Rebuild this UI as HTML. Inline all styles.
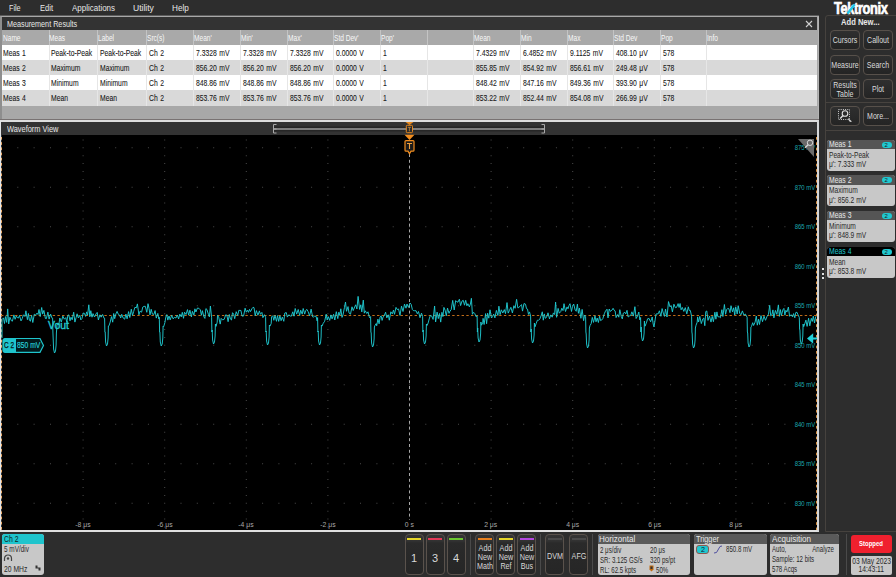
<!DOCTYPE html>
<html><head><meta charset="utf-8">
<style>
*{margin:0;padding:0;box-sizing:border-box}
html,body{width:896px;height:577px;overflow:hidden;background:#2d2d2d;font-family:"Liberation Sans",sans-serif;position:relative}
.a{position:absolute}
.t{position:absolute;line-height:1;white-space:nowrap}
.t span{display:inline-block}
.sbtn{position:absolute;width:30px;height:20px;border:1px solid #57504a;border-radius:4px;background:linear-gradient(#2f2f2f,#242424);color:#dcdcdc;font-size:9.5px;text-align:center;line-height:17.5px;white-space:nowrap}
.sbtn span{position:absolute;left:50%;top:0;transform:translateX(-50%) scaleX(.74);white-space:nowrap}
.cbtn{position:absolute;top:534px;width:19px;height:41px;border:1px solid #5a524c;border-radius:4px;background:linear-gradient(#343434 0,#323232 6px,#2a2a2a 8px,#262626 100%);color:#d8d8d8;text-align:center;white-space:nowrap}
.cbtn span{position:absolute;left:50%;transform:translateX(-50%) scaleX(.8)}
.cbar{position:absolute;left:1.5px;right:1.5px;top:3px;height:1.6px}
</style></head><body>
<div class="a" style="left:0;top:15.5px;width:819px;height:104.5px;background:#a8a8a8;border:1px solid #b4b4b4;border-top:1.5px solid #a8a8a8;border-left:2px solid #8e8e8e"></div>
<div class="a" style="left:0;top:15px;width:819px;height:1px;background:#5c5c5c"></div>
<div class="a" style="left:2px;top:17px;width:815px;height:13px;background:#333"></div>
<div class="t" style="left:7.40px;top:19.46px;font-size:9.5px;color:#e8e8e8;"><span style="transform:scaleX(0.76);transform-origin:0 0">Measurement Results</span></div>
<svg class="a" style="left:805px;top:20px" width="8" height="8"><path d="M1,1L7,7M7,1L1,7" stroke="#d0d0d0" stroke-width="1.1"/></svg>
<div class="a" style="left:2px;top:30px;width:815px;height:15px;background:#a9a9a9"></div>
<div class="t" style="left:2.80px;top:34.38px;font-size:9px;color:#f8f8f8;"><span style="transform:scaleX(0.73);transform-origin:0 0">Name</span></div>
<div class="a" style="left:48.5px;top:30px;width:1px;height:15px;background:#c4c4c4"></div>
<div class="t" style="left:49.30px;top:34.38px;font-size:9px;color:#f8f8f8;"><span style="transform:scaleX(0.73);transform-origin:0 0">Meas</span></div>
<div class="a" style="left:97px;top:30px;width:1px;height:15px;background:#c4c4c4"></div>
<div class="t" style="left:97.80px;top:34.38px;font-size:9px;color:#f8f8f8;"><span style="transform:scaleX(0.73);transform-origin:0 0">Label</span></div>
<div class="a" style="left:146px;top:30px;width:1px;height:15px;background:#c4c4c4"></div>
<div class="t" style="left:146.80px;top:34.38px;font-size:9px;color:#f8f8f8;"><span style="transform:scaleX(0.73);transform-origin:0 0">Src(s)</span></div>
<div class="a" style="left:193px;top:30px;width:1px;height:15px;background:#c4c4c4"></div>
<div class="t" style="left:193.80px;top:34.38px;font-size:9px;color:#f8f8f8;"><span style="transform:scaleX(0.73);transform-origin:0 0">Mean'</span></div>
<div class="a" style="left:240px;top:30px;width:1px;height:15px;background:#c4c4c4"></div>
<div class="t" style="left:240.80px;top:34.38px;font-size:9px;color:#f8f8f8;"><span style="transform:scaleX(0.73);transform-origin:0 0">Min'</span></div>
<div class="a" style="left:287px;top:30px;width:1px;height:15px;background:#c4c4c4"></div>
<div class="t" style="left:287.80px;top:34.38px;font-size:9px;color:#f8f8f8;"><span style="transform:scaleX(0.73);transform-origin:0 0">Max'</span></div>
<div class="a" style="left:333px;top:30px;width:1px;height:15px;background:#c4c4c4"></div>
<div class="t" style="left:333.80px;top:34.38px;font-size:9px;color:#f8f8f8;"><span style="transform:scaleX(0.73);transform-origin:0 0">Std Dev'</span></div>
<div class="a" style="left:380px;top:30px;width:1px;height:15px;background:#c4c4c4"></div>
<div class="t" style="left:380.80px;top:34.38px;font-size:9px;color:#f8f8f8;"><span style="transform:scaleX(0.73);transform-origin:0 0">Pop'</span></div>
<div class="a" style="left:426.5px;top:30px;width:1px;height:15px;background:#c4c4c4"></div>
<div class="a" style="left:473px;top:30px;width:1px;height:15px;background:#c4c4c4"></div>
<div class="t" style="left:473.80px;top:34.38px;font-size:9px;color:#f8f8f8;"><span style="transform:scaleX(0.73);transform-origin:0 0">Mean</span></div>
<div class="a" style="left:520px;top:30px;width:1px;height:15px;background:#c4c4c4"></div>
<div class="t" style="left:520.80px;top:34.38px;font-size:9px;color:#f8f8f8;"><span style="transform:scaleX(0.73);transform-origin:0 0">Min</span></div>
<div class="a" style="left:567px;top:30px;width:1px;height:15px;background:#c4c4c4"></div>
<div class="t" style="left:567.80px;top:34.38px;font-size:9px;color:#f8f8f8;"><span style="transform:scaleX(0.73);transform-origin:0 0">Max</span></div>
<div class="a" style="left:613px;top:30px;width:1px;height:15px;background:#c4c4c4"></div>
<div class="t" style="left:613.80px;top:34.38px;font-size:9px;color:#f8f8f8;"><span style="transform:scaleX(0.73);transform-origin:0 0">Std Dev</span></div>
<div class="a" style="left:660px;top:30px;width:1px;height:15px;background:#c4c4c4"></div>
<div class="t" style="left:660.80px;top:34.38px;font-size:9px;color:#f8f8f8;"><span style="transform:scaleX(0.73);transform-origin:0 0">Pop</span></div>
<div class="a" style="left:706px;top:30px;width:1px;height:15px;background:#c4c4c4"></div>
<div class="t" style="left:706.80px;top:34.38px;font-size:9px;color:#f8f8f8;"><span style="transform:scaleX(0.73);transform-origin:0 0">Info</span></div>
<div class="a" style="left:2px;top:45.0px;width:815px;height:15.15px;background:#ffffff"></div>
<div class="t" style="left:3.40px;top:48.68px;font-size:9px;color:#161616;-webkit-text-stroke:.08px #161616;word-spacing:0.8px"><span style="transform:scaleX(0.755);transform-origin:0 0">Meas 1</span></div>
<div class="a" style="left:48.5px;top:45.0px;width:1px;height:15.15px;background:#e6e6e6"></div>
<div class="t" style="left:51.00px;top:48.68px;font-size:9px;color:#161616;-webkit-text-stroke:.08px #161616;word-spacing:0.8px"><span style="transform:scaleX(0.755);transform-origin:0 0">Peak-to-Peak</span></div>
<div class="a" style="left:97px;top:45.0px;width:1px;height:15.15px;background:#e6e6e6"></div>
<div class="t" style="left:99.50px;top:48.68px;font-size:9px;color:#161616;-webkit-text-stroke:.08px #161616;word-spacing:0.8px"><span style="transform:scaleX(0.755);transform-origin:0 0">Peak-to-Peak</span></div>
<div class="a" style="left:146px;top:45.0px;width:1px;height:15.15px;background:#e6e6e6"></div>
<div class="t" style="left:148.50px;top:48.68px;font-size:9px;color:#161616;-webkit-text-stroke:.08px #161616;word-spacing:0.8px"><span style="transform:scaleX(0.755);transform-origin:0 0">Ch 2</span></div>
<div class="a" style="left:193px;top:45.0px;width:1px;height:15.15px;background:#e6e6e6"></div>
<div class="t" style="left:195.50px;top:48.68px;font-size:9px;color:#161616;-webkit-text-stroke:.08px #161616;word-spacing:0.8px"><span style="transform:scaleX(0.755);transform-origin:0 0">7.3328 mV</span></div>
<div class="a" style="left:240px;top:45.0px;width:1px;height:15.15px;background:#e6e6e6"></div>
<div class="t" style="left:242.50px;top:48.68px;font-size:9px;color:#161616;-webkit-text-stroke:.08px #161616;word-spacing:0.8px"><span style="transform:scaleX(0.755);transform-origin:0 0">7.3328 mV</span></div>
<div class="a" style="left:287px;top:45.0px;width:1px;height:15.15px;background:#e6e6e6"></div>
<div class="t" style="left:289.50px;top:48.68px;font-size:9px;color:#161616;-webkit-text-stroke:.08px #161616;word-spacing:0.8px"><span style="transform:scaleX(0.755);transform-origin:0 0">7.3328 mV</span></div>
<div class="a" style="left:333px;top:45.0px;width:1px;height:15.15px;background:#e6e6e6"></div>
<div class="t" style="left:335.50px;top:48.68px;font-size:9px;color:#161616;-webkit-text-stroke:.08px #161616;word-spacing:0.8px"><span style="transform:scaleX(0.755);transform-origin:0 0">0.0000 V</span></div>
<div class="a" style="left:380px;top:45.0px;width:1px;height:15.15px;background:#e6e6e6"></div>
<div class="t" style="left:382.50px;top:48.68px;font-size:9px;color:#161616;-webkit-text-stroke:.08px #161616;word-spacing:0.8px"><span style="transform:scaleX(0.755);transform-origin:0 0">1</span></div>
<div class="a" style="left:426.5px;top:45.0px;width:1px;height:15.15px;background:#e6e6e6"></div>
<div class="a" style="left:473px;top:45.0px;width:1px;height:15.15px;background:#e6e6e6"></div>
<div class="t" style="left:475.50px;top:48.68px;font-size:9px;color:#161616;-webkit-text-stroke:.08px #161616;word-spacing:0.8px"><span style="transform:scaleX(0.755);transform-origin:0 0">7.4329 mV</span></div>
<div class="a" style="left:520px;top:45.0px;width:1px;height:15.15px;background:#e6e6e6"></div>
<div class="t" style="left:522.50px;top:48.68px;font-size:9px;color:#161616;-webkit-text-stroke:.08px #161616;word-spacing:0.8px"><span style="transform:scaleX(0.755);transform-origin:0 0">6.4852 mV</span></div>
<div class="a" style="left:567px;top:45.0px;width:1px;height:15.15px;background:#e6e6e6"></div>
<div class="t" style="left:569.50px;top:48.68px;font-size:9px;color:#161616;-webkit-text-stroke:.08px #161616;word-spacing:0.8px"><span style="transform:scaleX(0.755);transform-origin:0 0">9.1125 mV</span></div>
<div class="a" style="left:613px;top:45.0px;width:1px;height:15.15px;background:#e6e6e6"></div>
<div class="t" style="left:615.50px;top:48.68px;font-size:9px;color:#161616;-webkit-text-stroke:.08px #161616;word-spacing:0.8px"><span style="transform:scaleX(0.755);transform-origin:0 0">408.10 μV</span></div>
<div class="a" style="left:660px;top:45.0px;width:1px;height:15.15px;background:#e6e6e6"></div>
<div class="t" style="left:662.50px;top:48.68px;font-size:9px;color:#161616;-webkit-text-stroke:.08px #161616;word-spacing:0.8px"><span style="transform:scaleX(0.755);transform-origin:0 0">578</span></div>
<div class="a" style="left:706px;top:45.0px;width:1px;height:15.15px;background:#e6e6e6"></div>
<div class="a" style="left:2px;top:60.15px;width:815px;height:15.15px;background:#d9d9d9"></div>
<div class="t" style="left:3.40px;top:63.83px;font-size:9px;color:#161616;-webkit-text-stroke:.08px #161616;word-spacing:0.8px"><span style="transform:scaleX(0.755);transform-origin:0 0">Meas 2</span></div>
<div class="a" style="left:48.5px;top:60.15px;width:1px;height:15.15px;background:#e6e6e6"></div>
<div class="t" style="left:51.00px;top:63.83px;font-size:9px;color:#161616;-webkit-text-stroke:.08px #161616;word-spacing:0.8px"><span style="transform:scaleX(0.755);transform-origin:0 0">Maximum</span></div>
<div class="a" style="left:97px;top:60.15px;width:1px;height:15.15px;background:#e6e6e6"></div>
<div class="t" style="left:99.50px;top:63.83px;font-size:9px;color:#161616;-webkit-text-stroke:.08px #161616;word-spacing:0.8px"><span style="transform:scaleX(0.755);transform-origin:0 0">Maximum</span></div>
<div class="a" style="left:146px;top:60.15px;width:1px;height:15.15px;background:#e6e6e6"></div>
<div class="t" style="left:148.50px;top:63.83px;font-size:9px;color:#161616;-webkit-text-stroke:.08px #161616;word-spacing:0.8px"><span style="transform:scaleX(0.755);transform-origin:0 0">Ch 2</span></div>
<div class="a" style="left:193px;top:60.15px;width:1px;height:15.15px;background:#e6e6e6"></div>
<div class="t" style="left:195.50px;top:63.83px;font-size:9px;color:#161616;-webkit-text-stroke:.08px #161616;word-spacing:0.8px"><span style="transform:scaleX(0.755);transform-origin:0 0">856.20 mV</span></div>
<div class="a" style="left:240px;top:60.15px;width:1px;height:15.15px;background:#e6e6e6"></div>
<div class="t" style="left:242.50px;top:63.83px;font-size:9px;color:#161616;-webkit-text-stroke:.08px #161616;word-spacing:0.8px"><span style="transform:scaleX(0.755);transform-origin:0 0">856.20 mV</span></div>
<div class="a" style="left:287px;top:60.15px;width:1px;height:15.15px;background:#e6e6e6"></div>
<div class="t" style="left:289.50px;top:63.83px;font-size:9px;color:#161616;-webkit-text-stroke:.08px #161616;word-spacing:0.8px"><span style="transform:scaleX(0.755);transform-origin:0 0">856.20 mV</span></div>
<div class="a" style="left:333px;top:60.15px;width:1px;height:15.15px;background:#e6e6e6"></div>
<div class="t" style="left:335.50px;top:63.83px;font-size:9px;color:#161616;-webkit-text-stroke:.08px #161616;word-spacing:0.8px"><span style="transform:scaleX(0.755);transform-origin:0 0">0.0000 V</span></div>
<div class="a" style="left:380px;top:60.15px;width:1px;height:15.15px;background:#e6e6e6"></div>
<div class="t" style="left:382.50px;top:63.83px;font-size:9px;color:#161616;-webkit-text-stroke:.08px #161616;word-spacing:0.8px"><span style="transform:scaleX(0.755);transform-origin:0 0">1</span></div>
<div class="a" style="left:426.5px;top:60.15px;width:1px;height:15.15px;background:#e6e6e6"></div>
<div class="a" style="left:473px;top:60.15px;width:1px;height:15.15px;background:#e6e6e6"></div>
<div class="t" style="left:475.50px;top:63.83px;font-size:9px;color:#161616;-webkit-text-stroke:.08px #161616;word-spacing:0.8px"><span style="transform:scaleX(0.755);transform-origin:0 0">855.85 mV</span></div>
<div class="a" style="left:520px;top:60.15px;width:1px;height:15.15px;background:#e6e6e6"></div>
<div class="t" style="left:522.50px;top:63.83px;font-size:9px;color:#161616;-webkit-text-stroke:.08px #161616;word-spacing:0.8px"><span style="transform:scaleX(0.755);transform-origin:0 0">854.92 mV</span></div>
<div class="a" style="left:567px;top:60.15px;width:1px;height:15.15px;background:#e6e6e6"></div>
<div class="t" style="left:569.50px;top:63.83px;font-size:9px;color:#161616;-webkit-text-stroke:.08px #161616;word-spacing:0.8px"><span style="transform:scaleX(0.755);transform-origin:0 0">856.61 mV</span></div>
<div class="a" style="left:613px;top:60.15px;width:1px;height:15.15px;background:#e6e6e6"></div>
<div class="t" style="left:615.50px;top:63.83px;font-size:9px;color:#161616;-webkit-text-stroke:.08px #161616;word-spacing:0.8px"><span style="transform:scaleX(0.755);transform-origin:0 0">249.48 μV</span></div>
<div class="a" style="left:660px;top:60.15px;width:1px;height:15.15px;background:#e6e6e6"></div>
<div class="t" style="left:662.50px;top:63.83px;font-size:9px;color:#161616;-webkit-text-stroke:.08px #161616;word-spacing:0.8px"><span style="transform:scaleX(0.755);transform-origin:0 0">578</span></div>
<div class="a" style="left:706px;top:60.15px;width:1px;height:15.15px;background:#e6e6e6"></div>
<div class="a" style="left:2px;top:75.3px;width:815px;height:15.15px;background:#ffffff"></div>
<div class="t" style="left:3.40px;top:78.98px;font-size:9px;color:#161616;-webkit-text-stroke:.08px #161616;word-spacing:0.8px"><span style="transform:scaleX(0.755);transform-origin:0 0">Meas 3</span></div>
<div class="a" style="left:48.5px;top:75.3px;width:1px;height:15.15px;background:#e6e6e6"></div>
<div class="t" style="left:51.00px;top:78.98px;font-size:9px;color:#161616;-webkit-text-stroke:.08px #161616;word-spacing:0.8px"><span style="transform:scaleX(0.755);transform-origin:0 0">Minimum</span></div>
<div class="a" style="left:97px;top:75.3px;width:1px;height:15.15px;background:#e6e6e6"></div>
<div class="t" style="left:99.50px;top:78.98px;font-size:9px;color:#161616;-webkit-text-stroke:.08px #161616;word-spacing:0.8px"><span style="transform:scaleX(0.755);transform-origin:0 0">Minimum</span></div>
<div class="a" style="left:146px;top:75.3px;width:1px;height:15.15px;background:#e6e6e6"></div>
<div class="t" style="left:148.50px;top:78.98px;font-size:9px;color:#161616;-webkit-text-stroke:.08px #161616;word-spacing:0.8px"><span style="transform:scaleX(0.755);transform-origin:0 0">Ch 2</span></div>
<div class="a" style="left:193px;top:75.3px;width:1px;height:15.15px;background:#e6e6e6"></div>
<div class="t" style="left:195.50px;top:78.98px;font-size:9px;color:#161616;-webkit-text-stroke:.08px #161616;word-spacing:0.8px"><span style="transform:scaleX(0.755);transform-origin:0 0">848.86 mV</span></div>
<div class="a" style="left:240px;top:75.3px;width:1px;height:15.15px;background:#e6e6e6"></div>
<div class="t" style="left:242.50px;top:78.98px;font-size:9px;color:#161616;-webkit-text-stroke:.08px #161616;word-spacing:0.8px"><span style="transform:scaleX(0.755);transform-origin:0 0">848.86 mV</span></div>
<div class="a" style="left:287px;top:75.3px;width:1px;height:15.15px;background:#e6e6e6"></div>
<div class="t" style="left:289.50px;top:78.98px;font-size:9px;color:#161616;-webkit-text-stroke:.08px #161616;word-spacing:0.8px"><span style="transform:scaleX(0.755);transform-origin:0 0">848.86 mV</span></div>
<div class="a" style="left:333px;top:75.3px;width:1px;height:15.15px;background:#e6e6e6"></div>
<div class="t" style="left:335.50px;top:78.98px;font-size:9px;color:#161616;-webkit-text-stroke:.08px #161616;word-spacing:0.8px"><span style="transform:scaleX(0.755);transform-origin:0 0">0.0000 V</span></div>
<div class="a" style="left:380px;top:75.3px;width:1px;height:15.15px;background:#e6e6e6"></div>
<div class="t" style="left:382.50px;top:78.98px;font-size:9px;color:#161616;-webkit-text-stroke:.08px #161616;word-spacing:0.8px"><span style="transform:scaleX(0.755);transform-origin:0 0">1</span></div>
<div class="a" style="left:426.5px;top:75.3px;width:1px;height:15.15px;background:#e6e6e6"></div>
<div class="a" style="left:473px;top:75.3px;width:1px;height:15.15px;background:#e6e6e6"></div>
<div class="t" style="left:475.50px;top:78.98px;font-size:9px;color:#161616;-webkit-text-stroke:.08px #161616;word-spacing:0.8px"><span style="transform:scaleX(0.755);transform-origin:0 0">848.42 mV</span></div>
<div class="a" style="left:520px;top:75.3px;width:1px;height:15.15px;background:#e6e6e6"></div>
<div class="t" style="left:522.50px;top:78.98px;font-size:9px;color:#161616;-webkit-text-stroke:.08px #161616;word-spacing:0.8px"><span style="transform:scaleX(0.755);transform-origin:0 0">847.16 mV</span></div>
<div class="a" style="left:567px;top:75.3px;width:1px;height:15.15px;background:#e6e6e6"></div>
<div class="t" style="left:569.50px;top:78.98px;font-size:9px;color:#161616;-webkit-text-stroke:.08px #161616;word-spacing:0.8px"><span style="transform:scaleX(0.755);transform-origin:0 0">849.36 mV</span></div>
<div class="a" style="left:613px;top:75.3px;width:1px;height:15.15px;background:#e6e6e6"></div>
<div class="t" style="left:615.50px;top:78.98px;font-size:9px;color:#161616;-webkit-text-stroke:.08px #161616;word-spacing:0.8px"><span style="transform:scaleX(0.755);transform-origin:0 0">393.90 μV</span></div>
<div class="a" style="left:660px;top:75.3px;width:1px;height:15.15px;background:#e6e6e6"></div>
<div class="t" style="left:662.50px;top:78.98px;font-size:9px;color:#161616;-webkit-text-stroke:.08px #161616;word-spacing:0.8px"><span style="transform:scaleX(0.755);transform-origin:0 0">578</span></div>
<div class="a" style="left:706px;top:75.3px;width:1px;height:15.15px;background:#e6e6e6"></div>
<div class="a" style="left:2px;top:90.45px;width:815px;height:15.15px;background:#d9d9d9"></div>
<div class="t" style="left:3.40px;top:94.13px;font-size:9px;color:#161616;-webkit-text-stroke:.08px #161616;word-spacing:0.8px"><span style="transform:scaleX(0.755);transform-origin:0 0">Meas 4</span></div>
<div class="a" style="left:48.5px;top:90.45px;width:1px;height:15.15px;background:#e6e6e6"></div>
<div class="t" style="left:51.00px;top:94.13px;font-size:9px;color:#161616;-webkit-text-stroke:.08px #161616;word-spacing:0.8px"><span style="transform:scaleX(0.755);transform-origin:0 0">Mean</span></div>
<div class="a" style="left:97px;top:90.45px;width:1px;height:15.15px;background:#e6e6e6"></div>
<div class="t" style="left:99.50px;top:94.13px;font-size:9px;color:#161616;-webkit-text-stroke:.08px #161616;word-spacing:0.8px"><span style="transform:scaleX(0.755);transform-origin:0 0">Mean</span></div>
<div class="a" style="left:146px;top:90.45px;width:1px;height:15.15px;background:#e6e6e6"></div>
<div class="t" style="left:148.50px;top:94.13px;font-size:9px;color:#161616;-webkit-text-stroke:.08px #161616;word-spacing:0.8px"><span style="transform:scaleX(0.755);transform-origin:0 0">Ch 2</span></div>
<div class="a" style="left:193px;top:90.45px;width:1px;height:15.15px;background:#e6e6e6"></div>
<div class="t" style="left:195.50px;top:94.13px;font-size:9px;color:#161616;-webkit-text-stroke:.08px #161616;word-spacing:0.8px"><span style="transform:scaleX(0.755);transform-origin:0 0">853.76 mV</span></div>
<div class="a" style="left:240px;top:90.45px;width:1px;height:15.15px;background:#e6e6e6"></div>
<div class="t" style="left:242.50px;top:94.13px;font-size:9px;color:#161616;-webkit-text-stroke:.08px #161616;word-spacing:0.8px"><span style="transform:scaleX(0.755);transform-origin:0 0">853.76 mV</span></div>
<div class="a" style="left:287px;top:90.45px;width:1px;height:15.15px;background:#e6e6e6"></div>
<div class="t" style="left:289.50px;top:94.13px;font-size:9px;color:#161616;-webkit-text-stroke:.08px #161616;word-spacing:0.8px"><span style="transform:scaleX(0.755);transform-origin:0 0">853.76 mV</span></div>
<div class="a" style="left:333px;top:90.45px;width:1px;height:15.15px;background:#e6e6e6"></div>
<div class="t" style="left:335.50px;top:94.13px;font-size:9px;color:#161616;-webkit-text-stroke:.08px #161616;word-spacing:0.8px"><span style="transform:scaleX(0.755);transform-origin:0 0">0.0000 V</span></div>
<div class="a" style="left:380px;top:90.45px;width:1px;height:15.15px;background:#e6e6e6"></div>
<div class="t" style="left:382.50px;top:94.13px;font-size:9px;color:#161616;-webkit-text-stroke:.08px #161616;word-spacing:0.8px"><span style="transform:scaleX(0.755);transform-origin:0 0">1</span></div>
<div class="a" style="left:426.5px;top:90.45px;width:1px;height:15.15px;background:#e6e6e6"></div>
<div class="a" style="left:473px;top:90.45px;width:1px;height:15.15px;background:#e6e6e6"></div>
<div class="t" style="left:475.50px;top:94.13px;font-size:9px;color:#161616;-webkit-text-stroke:.08px #161616;word-spacing:0.8px"><span style="transform:scaleX(0.755);transform-origin:0 0">853.22 mV</span></div>
<div class="a" style="left:520px;top:90.45px;width:1px;height:15.15px;background:#e6e6e6"></div>
<div class="t" style="left:522.50px;top:94.13px;font-size:9px;color:#161616;-webkit-text-stroke:.08px #161616;word-spacing:0.8px"><span style="transform:scaleX(0.755);transform-origin:0 0">852.44 mV</span></div>
<div class="a" style="left:567px;top:90.45px;width:1px;height:15.15px;background:#e6e6e6"></div>
<div class="t" style="left:569.50px;top:94.13px;font-size:9px;color:#161616;-webkit-text-stroke:.08px #161616;word-spacing:0.8px"><span style="transform:scaleX(0.755);transform-origin:0 0">854.08 mV</span></div>
<div class="a" style="left:613px;top:90.45px;width:1px;height:15.15px;background:#e6e6e6"></div>
<div class="t" style="left:615.50px;top:94.13px;font-size:9px;color:#161616;-webkit-text-stroke:.08px #161616;word-spacing:0.8px"><span style="transform:scaleX(0.755);transform-origin:0 0">266.99 μV</span></div>
<div class="a" style="left:660px;top:90.45px;width:1px;height:15.15px;background:#e6e6e6"></div>
<div class="t" style="left:662.50px;top:94.13px;font-size:9px;color:#161616;-webkit-text-stroke:.08px #161616;word-spacing:0.8px"><span style="transform:scaleX(0.755);transform-origin:0 0">578</span></div>
<div class="a" style="left:706px;top:90.45px;width:1px;height:15.15px;background:#e6e6e6"></div>
<div class="t" style="left:9.40px;top:2.96px;font-size:9.5px;color:#e6e6e6;"><span style="transform:scaleX(0.76);transform-origin:0 0">File</span></div>
<div class="t" style="left:39.80px;top:2.96px;font-size:9.5px;color:#e6e6e6;"><span style="transform:scaleX(0.8);transform-origin:0 0">Edit</span></div>
<div class="t" style="left:72.00px;top:2.96px;font-size:9.5px;color:#e6e6e6;"><span style="transform:scaleX(0.84);transform-origin:0 0">Applications</span></div>
<div class="t" style="left:133.20px;top:2.96px;font-size:9.5px;color:#e6e6e6;"><span style="transform:scaleX(0.9);transform-origin:0 0">Utility</span></div>
<div class="t" style="left:172.40px;top:2.96px;font-size:9.5px;color:#e6e6e6;"><span style="transform:scaleX(0.86);transform-origin:0 0">Help</span></div>
<div class="a" style="left:0;top:119px;width:819px;height:1px;background:#787272"></div>
<div class="a" style="left:0;top:120px;width:819px;height:412px;background:#000;border:2px solid #d4d6d8;border-top:2px solid #dedede;border-left:1px solid #e4e6e8;border-bottom:2px solid #e0e0e0"></div>
<div class="a" style="left:1px;top:122px;width:816px;height:12.7px;background:#333"></div>
<div class="t" style="left:7.20px;top:123.96px;font-size:9.5px;color:#e8e8e8;"><span style="transform:scaleX(0.78);transform-origin:0 0">Waveform View</span></div>
<svg class="a" style="left:0;top:0" width="896" height="577">
<path d="M82.6,139.4h1v1h-1zM82.6,147.3h1v1h-1zM82.6,155.2h1v1h-1zM82.6,163.1h1v1h-1zM82.6,171.0h1v1h-1zM82.6,178.9h1v1h-1zM82.6,186.8h1v1h-1zM82.6,194.7h1v1h-1zM82.6,202.6h1v1h-1zM82.6,210.5h1v1h-1zM82.6,218.4h1v1h-1zM82.6,226.3h1v1h-1zM82.6,234.2h1v1h-1zM82.6,242.1h1v1h-1zM82.6,250.0h1v1h-1zM82.6,257.9h1v1h-1zM82.6,265.8h1v1h-1zM82.6,273.7h1v1h-1zM82.6,281.6h1v1h-1zM82.6,289.5h1v1h-1zM82.6,297.4h1v1h-1zM82.6,305.3h1v1h-1zM82.6,313.2h1v1h-1zM82.6,321.1h1v1h-1zM82.6,329.0h1v1h-1zM82.6,336.9h1v1h-1zM82.6,344.8h1v1h-1zM82.6,352.7h1v1h-1zM82.6,360.6h1v1h-1zM82.6,368.5h1v1h-1zM82.6,376.4h1v1h-1zM82.6,384.3h1v1h-1zM82.6,392.2h1v1h-1zM82.6,400.1h1v1h-1zM82.6,408.0h1v1h-1zM82.6,415.9h1v1h-1zM82.6,423.8h1v1h-1zM82.6,431.7h1v1h-1zM82.6,439.6h1v1h-1zM82.6,447.5h1v1h-1zM82.6,455.4h1v1h-1zM82.6,463.3h1v1h-1zM82.6,471.2h1v1h-1zM82.6,479.1h1v1h-1zM82.6,487.0h1v1h-1zM82.6,494.9h1v1h-1zM82.6,502.8h1v1h-1zM82.6,510.7h1v1h-1zM82.6,518.6h1v1h-1zM82.6,526.5h1v1h-1zM164.2,139.4h1v1h-1zM164.2,147.3h1v1h-1zM164.2,155.2h1v1h-1zM164.2,163.1h1v1h-1zM164.2,171.0h1v1h-1zM164.2,178.9h1v1h-1zM164.2,186.8h1v1h-1zM164.2,194.7h1v1h-1zM164.2,202.6h1v1h-1zM164.2,210.5h1v1h-1zM164.2,218.4h1v1h-1zM164.2,226.3h1v1h-1zM164.2,234.2h1v1h-1zM164.2,242.1h1v1h-1zM164.2,250.0h1v1h-1zM164.2,257.9h1v1h-1zM164.2,265.8h1v1h-1zM164.2,273.7h1v1h-1zM164.2,281.6h1v1h-1zM164.2,289.5h1v1h-1zM164.2,297.4h1v1h-1zM164.2,305.3h1v1h-1zM164.2,313.2h1v1h-1zM164.2,321.1h1v1h-1zM164.2,329.0h1v1h-1zM164.2,336.9h1v1h-1zM164.2,344.8h1v1h-1zM164.2,352.7h1v1h-1zM164.2,360.6h1v1h-1zM164.2,368.5h1v1h-1zM164.2,376.4h1v1h-1zM164.2,384.3h1v1h-1zM164.2,392.2h1v1h-1zM164.2,400.1h1v1h-1zM164.2,408.0h1v1h-1zM164.2,415.9h1v1h-1zM164.2,423.8h1v1h-1zM164.2,431.7h1v1h-1zM164.2,439.6h1v1h-1zM164.2,447.5h1v1h-1zM164.2,455.4h1v1h-1zM164.2,463.3h1v1h-1zM164.2,471.2h1v1h-1zM164.2,479.1h1v1h-1zM164.2,487.0h1v1h-1zM164.2,494.9h1v1h-1zM164.2,502.8h1v1h-1zM164.2,510.7h1v1h-1zM164.2,518.6h1v1h-1zM164.2,526.5h1v1h-1zM245.8,139.4h1v1h-1zM245.8,147.3h1v1h-1zM245.8,155.2h1v1h-1zM245.8,163.1h1v1h-1zM245.8,171.0h1v1h-1zM245.8,178.9h1v1h-1zM245.8,186.8h1v1h-1zM245.8,194.7h1v1h-1zM245.8,202.6h1v1h-1zM245.8,210.5h1v1h-1zM245.8,218.4h1v1h-1zM245.8,226.3h1v1h-1zM245.8,234.2h1v1h-1zM245.8,242.1h1v1h-1zM245.8,250.0h1v1h-1zM245.8,257.9h1v1h-1zM245.8,265.8h1v1h-1zM245.8,273.7h1v1h-1zM245.8,281.6h1v1h-1zM245.8,289.5h1v1h-1zM245.8,297.4h1v1h-1zM245.8,305.3h1v1h-1zM245.8,313.2h1v1h-1zM245.8,321.1h1v1h-1zM245.8,329.0h1v1h-1zM245.8,336.9h1v1h-1zM245.8,344.8h1v1h-1zM245.8,352.7h1v1h-1zM245.8,360.6h1v1h-1zM245.8,368.5h1v1h-1zM245.8,376.4h1v1h-1zM245.8,384.3h1v1h-1zM245.8,392.2h1v1h-1zM245.8,400.1h1v1h-1zM245.8,408.0h1v1h-1zM245.8,415.9h1v1h-1zM245.8,423.8h1v1h-1zM245.8,431.7h1v1h-1zM245.8,439.6h1v1h-1zM245.8,447.5h1v1h-1zM245.8,455.4h1v1h-1zM245.8,463.3h1v1h-1zM245.8,471.2h1v1h-1zM245.8,479.1h1v1h-1zM245.8,487.0h1v1h-1zM245.8,494.9h1v1h-1zM245.8,502.8h1v1h-1zM245.8,510.7h1v1h-1zM245.8,518.6h1v1h-1zM245.8,526.5h1v1h-1zM327.4,139.4h1v1h-1zM327.4,147.3h1v1h-1zM327.4,155.2h1v1h-1zM327.4,163.1h1v1h-1zM327.4,171.0h1v1h-1zM327.4,178.9h1v1h-1zM327.4,186.8h1v1h-1zM327.4,194.7h1v1h-1zM327.4,202.6h1v1h-1zM327.4,210.5h1v1h-1zM327.4,218.4h1v1h-1zM327.4,226.3h1v1h-1zM327.4,234.2h1v1h-1zM327.4,242.1h1v1h-1zM327.4,250.0h1v1h-1zM327.4,257.9h1v1h-1zM327.4,265.8h1v1h-1zM327.4,273.7h1v1h-1zM327.4,281.6h1v1h-1zM327.4,289.5h1v1h-1zM327.4,297.4h1v1h-1zM327.4,305.3h1v1h-1zM327.4,313.2h1v1h-1zM327.4,321.1h1v1h-1zM327.4,329.0h1v1h-1zM327.4,336.9h1v1h-1zM327.4,344.8h1v1h-1zM327.4,352.7h1v1h-1zM327.4,360.6h1v1h-1zM327.4,368.5h1v1h-1zM327.4,376.4h1v1h-1zM327.4,384.3h1v1h-1zM327.4,392.2h1v1h-1zM327.4,400.1h1v1h-1zM327.4,408.0h1v1h-1zM327.4,415.9h1v1h-1zM327.4,423.8h1v1h-1zM327.4,431.7h1v1h-1zM327.4,439.6h1v1h-1zM327.4,447.5h1v1h-1zM327.4,455.4h1v1h-1zM327.4,463.3h1v1h-1zM327.4,471.2h1v1h-1zM327.4,479.1h1v1h-1zM327.4,487.0h1v1h-1zM327.4,494.9h1v1h-1zM327.4,502.8h1v1h-1zM327.4,510.7h1v1h-1zM327.4,518.6h1v1h-1zM327.4,526.5h1v1h-1zM490.6,139.4h1v1h-1zM490.6,147.3h1v1h-1zM490.6,155.2h1v1h-1zM490.6,163.1h1v1h-1zM490.6,171.0h1v1h-1zM490.6,178.9h1v1h-1zM490.6,186.8h1v1h-1zM490.6,194.7h1v1h-1zM490.6,202.6h1v1h-1zM490.6,210.5h1v1h-1zM490.6,218.4h1v1h-1zM490.6,226.3h1v1h-1zM490.6,234.2h1v1h-1zM490.6,242.1h1v1h-1zM490.6,250.0h1v1h-1zM490.6,257.9h1v1h-1zM490.6,265.8h1v1h-1zM490.6,273.7h1v1h-1zM490.6,281.6h1v1h-1zM490.6,289.5h1v1h-1zM490.6,297.4h1v1h-1zM490.6,305.3h1v1h-1zM490.6,313.2h1v1h-1zM490.6,321.1h1v1h-1zM490.6,329.0h1v1h-1zM490.6,336.9h1v1h-1zM490.6,344.8h1v1h-1zM490.6,352.7h1v1h-1zM490.6,360.6h1v1h-1zM490.6,368.5h1v1h-1zM490.6,376.4h1v1h-1zM490.6,384.3h1v1h-1zM490.6,392.2h1v1h-1zM490.6,400.1h1v1h-1zM490.6,408.0h1v1h-1zM490.6,415.9h1v1h-1zM490.6,423.8h1v1h-1zM490.6,431.7h1v1h-1zM490.6,439.6h1v1h-1zM490.6,447.5h1v1h-1zM490.6,455.4h1v1h-1zM490.6,463.3h1v1h-1zM490.6,471.2h1v1h-1zM490.6,479.1h1v1h-1zM490.6,487.0h1v1h-1zM490.6,494.9h1v1h-1zM490.6,502.8h1v1h-1zM490.6,510.7h1v1h-1zM490.6,518.6h1v1h-1zM490.6,526.5h1v1h-1zM572.2,139.4h1v1h-1zM572.2,147.3h1v1h-1zM572.2,155.2h1v1h-1zM572.2,163.1h1v1h-1zM572.2,171.0h1v1h-1zM572.2,178.9h1v1h-1zM572.2,186.8h1v1h-1zM572.2,194.7h1v1h-1zM572.2,202.6h1v1h-1zM572.2,210.5h1v1h-1zM572.2,218.4h1v1h-1zM572.2,226.3h1v1h-1zM572.2,234.2h1v1h-1zM572.2,242.1h1v1h-1zM572.2,250.0h1v1h-1zM572.2,257.9h1v1h-1zM572.2,265.8h1v1h-1zM572.2,273.7h1v1h-1zM572.2,281.6h1v1h-1zM572.2,289.5h1v1h-1zM572.2,297.4h1v1h-1zM572.2,305.3h1v1h-1zM572.2,313.2h1v1h-1zM572.2,321.1h1v1h-1zM572.2,329.0h1v1h-1zM572.2,336.9h1v1h-1zM572.2,344.8h1v1h-1zM572.2,352.7h1v1h-1zM572.2,360.6h1v1h-1zM572.2,368.5h1v1h-1zM572.2,376.4h1v1h-1zM572.2,384.3h1v1h-1zM572.2,392.2h1v1h-1zM572.2,400.1h1v1h-1zM572.2,408.0h1v1h-1zM572.2,415.9h1v1h-1zM572.2,423.8h1v1h-1zM572.2,431.7h1v1h-1zM572.2,439.6h1v1h-1zM572.2,447.5h1v1h-1zM572.2,455.4h1v1h-1zM572.2,463.3h1v1h-1zM572.2,471.2h1v1h-1zM572.2,479.1h1v1h-1zM572.2,487.0h1v1h-1zM572.2,494.9h1v1h-1zM572.2,502.8h1v1h-1zM572.2,510.7h1v1h-1zM572.2,518.6h1v1h-1zM572.2,526.5h1v1h-1zM653.8,139.4h1v1h-1zM653.8,147.3h1v1h-1zM653.8,155.2h1v1h-1zM653.8,163.1h1v1h-1zM653.8,171.0h1v1h-1zM653.8,178.9h1v1h-1zM653.8,186.8h1v1h-1zM653.8,194.7h1v1h-1zM653.8,202.6h1v1h-1zM653.8,210.5h1v1h-1zM653.8,218.4h1v1h-1zM653.8,226.3h1v1h-1zM653.8,234.2h1v1h-1zM653.8,242.1h1v1h-1zM653.8,250.0h1v1h-1zM653.8,257.9h1v1h-1zM653.8,265.8h1v1h-1zM653.8,273.7h1v1h-1zM653.8,281.6h1v1h-1zM653.8,289.5h1v1h-1zM653.8,297.4h1v1h-1zM653.8,305.3h1v1h-1zM653.8,313.2h1v1h-1zM653.8,321.1h1v1h-1zM653.8,329.0h1v1h-1zM653.8,336.9h1v1h-1zM653.8,344.8h1v1h-1zM653.8,352.7h1v1h-1zM653.8,360.6h1v1h-1zM653.8,368.5h1v1h-1zM653.8,376.4h1v1h-1zM653.8,384.3h1v1h-1zM653.8,392.2h1v1h-1zM653.8,400.1h1v1h-1zM653.8,408.0h1v1h-1zM653.8,415.9h1v1h-1zM653.8,423.8h1v1h-1zM653.8,431.7h1v1h-1zM653.8,439.6h1v1h-1zM653.8,447.5h1v1h-1zM653.8,455.4h1v1h-1zM653.8,463.3h1v1h-1zM653.8,471.2h1v1h-1zM653.8,479.1h1v1h-1zM653.8,487.0h1v1h-1zM653.8,494.9h1v1h-1zM653.8,502.8h1v1h-1zM653.8,510.7h1v1h-1zM653.8,518.6h1v1h-1zM653.8,526.5h1v1h-1zM735.4,139.4h1v1h-1zM735.4,147.3h1v1h-1zM735.4,155.2h1v1h-1zM735.4,163.1h1v1h-1zM735.4,171.0h1v1h-1zM735.4,178.9h1v1h-1zM735.4,186.8h1v1h-1zM735.4,194.7h1v1h-1zM735.4,202.6h1v1h-1zM735.4,210.5h1v1h-1zM735.4,218.4h1v1h-1zM735.4,226.3h1v1h-1zM735.4,234.2h1v1h-1zM735.4,242.1h1v1h-1zM735.4,250.0h1v1h-1zM735.4,257.9h1v1h-1zM735.4,265.8h1v1h-1zM735.4,273.7h1v1h-1zM735.4,281.6h1v1h-1zM735.4,289.5h1v1h-1zM735.4,297.4h1v1h-1zM735.4,305.3h1v1h-1zM735.4,313.2h1v1h-1zM735.4,321.1h1v1h-1zM735.4,329.0h1v1h-1zM735.4,336.9h1v1h-1zM735.4,344.8h1v1h-1zM735.4,352.7h1v1h-1zM735.4,360.6h1v1h-1zM735.4,368.5h1v1h-1zM735.4,376.4h1v1h-1zM735.4,384.3h1v1h-1zM735.4,392.2h1v1h-1zM735.4,400.1h1v1h-1zM735.4,408.0h1v1h-1zM735.4,415.9h1v1h-1zM735.4,423.8h1v1h-1zM735.4,431.7h1v1h-1zM735.4,439.6h1v1h-1zM735.4,447.5h1v1h-1zM735.4,455.4h1v1h-1zM735.4,463.3h1v1h-1zM735.4,471.2h1v1h-1zM735.4,479.1h1v1h-1zM735.4,487.0h1v1h-1zM735.4,494.9h1v1h-1zM735.4,502.8h1v1h-1zM735.4,510.7h1v1h-1zM735.4,518.6h1v1h-1zM735.4,526.5h1v1h-1zM17.3,147.3h1v1h-1zM33.6,147.3h1v1h-1zM50.0,147.3h1v1h-1zM66.3,147.3h1v1h-1zM82.6,147.3h1v1h-1zM98.9,147.3h1v1h-1zM115.2,147.3h1v1h-1zM131.6,147.3h1v1h-1zM147.9,147.3h1v1h-1zM164.2,147.3h1v1h-1zM180.5,147.3h1v1h-1zM196.8,147.3h1v1h-1zM213.2,147.3h1v1h-1zM229.5,147.3h1v1h-1zM245.8,147.3h1v1h-1zM262.1,147.3h1v1h-1zM278.4,147.3h1v1h-1zM294.8,147.3h1v1h-1zM311.1,147.3h1v1h-1zM327.4,147.3h1v1h-1zM343.7,147.3h1v1h-1zM360.0,147.3h1v1h-1zM376.4,147.3h1v1h-1zM392.7,147.3h1v1h-1zM409.0,147.3h1v1h-1zM425.3,147.3h1v1h-1zM441.6,147.3h1v1h-1zM458.0,147.3h1v1h-1zM474.3,147.3h1v1h-1zM490.6,147.3h1v1h-1zM506.9,147.3h1v1h-1zM523.2,147.3h1v1h-1zM539.6,147.3h1v1h-1zM555.9,147.3h1v1h-1zM572.2,147.3h1v1h-1zM588.5,147.3h1v1h-1zM604.8,147.3h1v1h-1zM621.2,147.3h1v1h-1zM637.5,147.3h1v1h-1zM653.8,147.3h1v1h-1zM670.1,147.3h1v1h-1zM686.4,147.3h1v1h-1zM702.8,147.3h1v1h-1zM719.1,147.3h1v1h-1zM735.4,147.3h1v1h-1zM751.7,147.3h1v1h-1zM768.0,147.3h1v1h-1zM784.4,147.3h1v1h-1zM800.7,147.3h1v1h-1zM17.3,186.8h1v1h-1zM33.6,186.8h1v1h-1zM50.0,186.8h1v1h-1zM66.3,186.8h1v1h-1zM82.6,186.8h1v1h-1zM98.9,186.8h1v1h-1zM115.2,186.8h1v1h-1zM131.6,186.8h1v1h-1zM147.9,186.8h1v1h-1zM164.2,186.8h1v1h-1zM180.5,186.8h1v1h-1zM196.8,186.8h1v1h-1zM213.2,186.8h1v1h-1zM229.5,186.8h1v1h-1zM245.8,186.8h1v1h-1zM262.1,186.8h1v1h-1zM278.4,186.8h1v1h-1zM294.8,186.8h1v1h-1zM311.1,186.8h1v1h-1zM327.4,186.8h1v1h-1zM343.7,186.8h1v1h-1zM360.0,186.8h1v1h-1zM376.4,186.8h1v1h-1zM392.7,186.8h1v1h-1zM409.0,186.8h1v1h-1zM425.3,186.8h1v1h-1zM441.6,186.8h1v1h-1zM458.0,186.8h1v1h-1zM474.3,186.8h1v1h-1zM490.6,186.8h1v1h-1zM506.9,186.8h1v1h-1zM523.2,186.8h1v1h-1zM539.6,186.8h1v1h-1zM555.9,186.8h1v1h-1zM572.2,186.8h1v1h-1zM588.5,186.8h1v1h-1zM604.8,186.8h1v1h-1zM621.2,186.8h1v1h-1zM637.5,186.8h1v1h-1zM653.8,186.8h1v1h-1zM670.1,186.8h1v1h-1zM686.4,186.8h1v1h-1zM702.8,186.8h1v1h-1zM719.1,186.8h1v1h-1zM735.4,186.8h1v1h-1zM751.7,186.8h1v1h-1zM768.0,186.8h1v1h-1zM784.4,186.8h1v1h-1zM800.7,186.8h1v1h-1zM17.3,226.3h1v1h-1zM33.6,226.3h1v1h-1zM50.0,226.3h1v1h-1zM66.3,226.3h1v1h-1zM82.6,226.3h1v1h-1zM98.9,226.3h1v1h-1zM115.2,226.3h1v1h-1zM131.6,226.3h1v1h-1zM147.9,226.3h1v1h-1zM164.2,226.3h1v1h-1zM180.5,226.3h1v1h-1zM196.8,226.3h1v1h-1zM213.2,226.3h1v1h-1zM229.5,226.3h1v1h-1zM245.8,226.3h1v1h-1zM262.1,226.3h1v1h-1zM278.4,226.3h1v1h-1zM294.8,226.3h1v1h-1zM311.1,226.3h1v1h-1zM327.4,226.3h1v1h-1zM343.7,226.3h1v1h-1zM360.0,226.3h1v1h-1zM376.4,226.3h1v1h-1zM392.7,226.3h1v1h-1zM409.0,226.3h1v1h-1zM425.3,226.3h1v1h-1zM441.6,226.3h1v1h-1zM458.0,226.3h1v1h-1zM474.3,226.3h1v1h-1zM490.6,226.3h1v1h-1zM506.9,226.3h1v1h-1zM523.2,226.3h1v1h-1zM539.6,226.3h1v1h-1zM555.9,226.3h1v1h-1zM572.2,226.3h1v1h-1zM588.5,226.3h1v1h-1zM604.8,226.3h1v1h-1zM621.2,226.3h1v1h-1zM637.5,226.3h1v1h-1zM653.8,226.3h1v1h-1zM670.1,226.3h1v1h-1zM686.4,226.3h1v1h-1zM702.8,226.3h1v1h-1zM719.1,226.3h1v1h-1zM735.4,226.3h1v1h-1zM751.7,226.3h1v1h-1zM768.0,226.3h1v1h-1zM784.4,226.3h1v1h-1zM800.7,226.3h1v1h-1zM17.3,265.8h1v1h-1zM33.6,265.8h1v1h-1zM50.0,265.8h1v1h-1zM66.3,265.8h1v1h-1zM82.6,265.8h1v1h-1zM98.9,265.8h1v1h-1zM115.2,265.8h1v1h-1zM131.6,265.8h1v1h-1zM147.9,265.8h1v1h-1zM164.2,265.8h1v1h-1zM180.5,265.8h1v1h-1zM196.8,265.8h1v1h-1zM213.2,265.8h1v1h-1zM229.5,265.8h1v1h-1zM245.8,265.8h1v1h-1zM262.1,265.8h1v1h-1zM278.4,265.8h1v1h-1zM294.8,265.8h1v1h-1zM311.1,265.8h1v1h-1zM327.4,265.8h1v1h-1zM343.7,265.8h1v1h-1zM360.0,265.8h1v1h-1zM376.4,265.8h1v1h-1zM392.7,265.8h1v1h-1zM409.0,265.8h1v1h-1zM425.3,265.8h1v1h-1zM441.6,265.8h1v1h-1zM458.0,265.8h1v1h-1zM474.3,265.8h1v1h-1zM490.6,265.8h1v1h-1zM506.9,265.8h1v1h-1zM523.2,265.8h1v1h-1zM539.6,265.8h1v1h-1zM555.9,265.8h1v1h-1zM572.2,265.8h1v1h-1zM588.5,265.8h1v1h-1zM604.8,265.8h1v1h-1zM621.2,265.8h1v1h-1zM637.5,265.8h1v1h-1zM653.8,265.8h1v1h-1zM670.1,265.8h1v1h-1zM686.4,265.8h1v1h-1zM702.8,265.8h1v1h-1zM719.1,265.8h1v1h-1zM735.4,265.8h1v1h-1zM751.7,265.8h1v1h-1zM768.0,265.8h1v1h-1zM784.4,265.8h1v1h-1zM800.7,265.8h1v1h-1zM17.3,305.3h1v1h-1zM33.6,305.3h1v1h-1zM50.0,305.3h1v1h-1zM66.3,305.3h1v1h-1zM82.6,305.3h1v1h-1zM98.9,305.3h1v1h-1zM115.2,305.3h1v1h-1zM131.6,305.3h1v1h-1zM147.9,305.3h1v1h-1zM164.2,305.3h1v1h-1zM180.5,305.3h1v1h-1zM196.8,305.3h1v1h-1zM213.2,305.3h1v1h-1zM229.5,305.3h1v1h-1zM245.8,305.3h1v1h-1zM262.1,305.3h1v1h-1zM278.4,305.3h1v1h-1zM294.8,305.3h1v1h-1zM311.1,305.3h1v1h-1zM327.4,305.3h1v1h-1zM343.7,305.3h1v1h-1zM360.0,305.3h1v1h-1zM376.4,305.3h1v1h-1zM392.7,305.3h1v1h-1zM409.0,305.3h1v1h-1zM425.3,305.3h1v1h-1zM441.6,305.3h1v1h-1zM458.0,305.3h1v1h-1zM474.3,305.3h1v1h-1zM490.6,305.3h1v1h-1zM506.9,305.3h1v1h-1zM523.2,305.3h1v1h-1zM539.6,305.3h1v1h-1zM555.9,305.3h1v1h-1zM572.2,305.3h1v1h-1zM588.5,305.3h1v1h-1zM604.8,305.3h1v1h-1zM621.2,305.3h1v1h-1zM637.5,305.3h1v1h-1zM653.8,305.3h1v1h-1zM670.1,305.3h1v1h-1zM686.4,305.3h1v1h-1zM702.8,305.3h1v1h-1zM719.1,305.3h1v1h-1zM735.4,305.3h1v1h-1zM751.7,305.3h1v1h-1zM768.0,305.3h1v1h-1zM784.4,305.3h1v1h-1zM800.7,305.3h1v1h-1zM17.3,344.8h1v1h-1zM33.6,344.8h1v1h-1zM50.0,344.8h1v1h-1zM66.3,344.8h1v1h-1zM82.6,344.8h1v1h-1zM98.9,344.8h1v1h-1zM115.2,344.8h1v1h-1zM131.6,344.8h1v1h-1zM147.9,344.8h1v1h-1zM164.2,344.8h1v1h-1zM180.5,344.8h1v1h-1zM196.8,344.8h1v1h-1zM213.2,344.8h1v1h-1zM229.5,344.8h1v1h-1zM245.8,344.8h1v1h-1zM262.1,344.8h1v1h-1zM278.4,344.8h1v1h-1zM294.8,344.8h1v1h-1zM311.1,344.8h1v1h-1zM327.4,344.8h1v1h-1zM343.7,344.8h1v1h-1zM360.0,344.8h1v1h-1zM376.4,344.8h1v1h-1zM392.7,344.8h1v1h-1zM409.0,344.8h1v1h-1zM425.3,344.8h1v1h-1zM441.6,344.8h1v1h-1zM458.0,344.8h1v1h-1zM474.3,344.8h1v1h-1zM490.6,344.8h1v1h-1zM506.9,344.8h1v1h-1zM523.2,344.8h1v1h-1zM539.6,344.8h1v1h-1zM555.9,344.8h1v1h-1zM572.2,344.8h1v1h-1zM588.5,344.8h1v1h-1zM604.8,344.8h1v1h-1zM621.2,344.8h1v1h-1zM637.5,344.8h1v1h-1zM653.8,344.8h1v1h-1zM670.1,344.8h1v1h-1zM686.4,344.8h1v1h-1zM702.8,344.8h1v1h-1zM719.1,344.8h1v1h-1zM735.4,344.8h1v1h-1zM751.7,344.8h1v1h-1zM768.0,344.8h1v1h-1zM784.4,344.8h1v1h-1zM800.7,344.8h1v1h-1zM17.3,384.3h1v1h-1zM33.6,384.3h1v1h-1zM50.0,384.3h1v1h-1zM66.3,384.3h1v1h-1zM82.6,384.3h1v1h-1zM98.9,384.3h1v1h-1zM115.2,384.3h1v1h-1zM131.6,384.3h1v1h-1zM147.9,384.3h1v1h-1zM164.2,384.3h1v1h-1zM180.5,384.3h1v1h-1zM196.8,384.3h1v1h-1zM213.2,384.3h1v1h-1zM229.5,384.3h1v1h-1zM245.8,384.3h1v1h-1zM262.1,384.3h1v1h-1zM278.4,384.3h1v1h-1zM294.8,384.3h1v1h-1zM311.1,384.3h1v1h-1zM327.4,384.3h1v1h-1zM343.7,384.3h1v1h-1zM360.0,384.3h1v1h-1zM376.4,384.3h1v1h-1zM392.7,384.3h1v1h-1zM409.0,384.3h1v1h-1zM425.3,384.3h1v1h-1zM441.6,384.3h1v1h-1zM458.0,384.3h1v1h-1zM474.3,384.3h1v1h-1zM490.6,384.3h1v1h-1zM506.9,384.3h1v1h-1zM523.2,384.3h1v1h-1zM539.6,384.3h1v1h-1zM555.9,384.3h1v1h-1zM572.2,384.3h1v1h-1zM588.5,384.3h1v1h-1zM604.8,384.3h1v1h-1zM621.2,384.3h1v1h-1zM637.5,384.3h1v1h-1zM653.8,384.3h1v1h-1zM670.1,384.3h1v1h-1zM686.4,384.3h1v1h-1zM702.8,384.3h1v1h-1zM719.1,384.3h1v1h-1zM735.4,384.3h1v1h-1zM751.7,384.3h1v1h-1zM768.0,384.3h1v1h-1zM784.4,384.3h1v1h-1zM800.7,384.3h1v1h-1zM17.3,423.8h1v1h-1zM33.6,423.8h1v1h-1zM50.0,423.8h1v1h-1zM66.3,423.8h1v1h-1zM82.6,423.8h1v1h-1zM98.9,423.8h1v1h-1zM115.2,423.8h1v1h-1zM131.6,423.8h1v1h-1zM147.9,423.8h1v1h-1zM164.2,423.8h1v1h-1zM180.5,423.8h1v1h-1zM196.8,423.8h1v1h-1zM213.2,423.8h1v1h-1zM229.5,423.8h1v1h-1zM245.8,423.8h1v1h-1zM262.1,423.8h1v1h-1zM278.4,423.8h1v1h-1zM294.8,423.8h1v1h-1zM311.1,423.8h1v1h-1zM327.4,423.8h1v1h-1zM343.7,423.8h1v1h-1zM360.0,423.8h1v1h-1zM376.4,423.8h1v1h-1zM392.7,423.8h1v1h-1zM409.0,423.8h1v1h-1zM425.3,423.8h1v1h-1zM441.6,423.8h1v1h-1zM458.0,423.8h1v1h-1zM474.3,423.8h1v1h-1zM490.6,423.8h1v1h-1zM506.9,423.8h1v1h-1zM523.2,423.8h1v1h-1zM539.6,423.8h1v1h-1zM555.9,423.8h1v1h-1zM572.2,423.8h1v1h-1zM588.5,423.8h1v1h-1zM604.8,423.8h1v1h-1zM621.2,423.8h1v1h-1zM637.5,423.8h1v1h-1zM653.8,423.8h1v1h-1zM670.1,423.8h1v1h-1zM686.4,423.8h1v1h-1zM702.8,423.8h1v1h-1zM719.1,423.8h1v1h-1zM735.4,423.8h1v1h-1zM751.7,423.8h1v1h-1zM768.0,423.8h1v1h-1zM784.4,423.8h1v1h-1zM800.7,423.8h1v1h-1zM17.3,463.3h1v1h-1zM33.6,463.3h1v1h-1zM50.0,463.3h1v1h-1zM66.3,463.3h1v1h-1zM82.6,463.3h1v1h-1zM98.9,463.3h1v1h-1zM115.2,463.3h1v1h-1zM131.6,463.3h1v1h-1zM147.9,463.3h1v1h-1zM164.2,463.3h1v1h-1zM180.5,463.3h1v1h-1zM196.8,463.3h1v1h-1zM213.2,463.3h1v1h-1zM229.5,463.3h1v1h-1zM245.8,463.3h1v1h-1zM262.1,463.3h1v1h-1zM278.4,463.3h1v1h-1zM294.8,463.3h1v1h-1zM311.1,463.3h1v1h-1zM327.4,463.3h1v1h-1zM343.7,463.3h1v1h-1zM360.0,463.3h1v1h-1zM376.4,463.3h1v1h-1zM392.7,463.3h1v1h-1zM409.0,463.3h1v1h-1zM425.3,463.3h1v1h-1zM441.6,463.3h1v1h-1zM458.0,463.3h1v1h-1zM474.3,463.3h1v1h-1zM490.6,463.3h1v1h-1zM506.9,463.3h1v1h-1zM523.2,463.3h1v1h-1zM539.6,463.3h1v1h-1zM555.9,463.3h1v1h-1zM572.2,463.3h1v1h-1zM588.5,463.3h1v1h-1zM604.8,463.3h1v1h-1zM621.2,463.3h1v1h-1zM637.5,463.3h1v1h-1zM653.8,463.3h1v1h-1zM670.1,463.3h1v1h-1zM686.4,463.3h1v1h-1zM702.8,463.3h1v1h-1zM719.1,463.3h1v1h-1zM735.4,463.3h1v1h-1zM751.7,463.3h1v1h-1zM768.0,463.3h1v1h-1zM784.4,463.3h1v1h-1zM800.7,463.3h1v1h-1zM17.3,502.8h1v1h-1zM33.6,502.8h1v1h-1zM50.0,502.8h1v1h-1zM66.3,502.8h1v1h-1zM82.6,502.8h1v1h-1zM98.9,502.8h1v1h-1zM115.2,502.8h1v1h-1zM131.6,502.8h1v1h-1zM147.9,502.8h1v1h-1zM164.2,502.8h1v1h-1zM180.5,502.8h1v1h-1zM196.8,502.8h1v1h-1zM213.2,502.8h1v1h-1zM229.5,502.8h1v1h-1zM245.8,502.8h1v1h-1zM262.1,502.8h1v1h-1zM278.4,502.8h1v1h-1zM294.8,502.8h1v1h-1zM311.1,502.8h1v1h-1zM327.4,502.8h1v1h-1zM343.7,502.8h1v1h-1zM360.0,502.8h1v1h-1zM376.4,502.8h1v1h-1zM392.7,502.8h1v1h-1zM409.0,502.8h1v1h-1zM425.3,502.8h1v1h-1zM441.6,502.8h1v1h-1zM458.0,502.8h1v1h-1zM474.3,502.8h1v1h-1zM490.6,502.8h1v1h-1zM506.9,502.8h1v1h-1zM523.2,502.8h1v1h-1zM539.6,502.8h1v1h-1zM555.9,502.8h1v1h-1zM572.2,502.8h1v1h-1zM588.5,502.8h1v1h-1zM604.8,502.8h1v1h-1zM621.2,502.8h1v1h-1zM637.5,502.8h1v1h-1zM653.8,502.8h1v1h-1zM670.1,502.8h1v1h-1zM686.4,502.8h1v1h-1zM702.8,502.8h1v1h-1zM719.1,502.8h1v1h-1zM735.4,502.8h1v1h-1zM751.7,502.8h1v1h-1zM768.0,502.8h1v1h-1zM784.4,502.8h1v1h-1zM800.7,502.8h1v1h-1z" fill="#4a4a4a"/>
<line x1="1.5" y1="135" x2="1.5" y2="530" stroke="#2c3238" stroke-width="1"/><line x1="1.5" y1="137" x2="1.5" y2="530" stroke="#f0b070" stroke-width="1" stroke-dasharray="2.7 2.5"/>
<line x1="816.5" y1="137" x2="816.5" y2="530" stroke="#d89040" stroke-width="1" stroke-dasharray="2.7 2.65"/>
<line x1="1" y1="315.5" x2="817" y2="315.5" stroke="#c06c18" stroke-width="1.1" stroke-dasharray="2.4 2.3"/>
<line x1="409.5" y1="154" x2="409.5" y2="520" stroke="#a8a8a8" stroke-width="1" stroke-dasharray="3 2.8"/>
<rect x="274" y="126.5" width="270" height="5" fill="#262626"/><line x1="274" y1="129" x2="544" y2="129" stroke="#9c9c9c" stroke-width="1.6"/>
<path d="M276.5,124.5h-3v8.5h3M273.5,129h3M541.5,124.5h3v8.5h-3M544.5,129h-3" stroke="#a8a8a8" fill="none" stroke-width="1"/>
<path d="M405.5,122h8l-4,3z" fill="#e8891e"/>
<rect x="406.3" y="125.3" width="6.2" height="7.4" rx="1" fill="#2a2a2a" stroke="#e8891e" stroke-width="1"/><path d="M407.8,127.3h3.2M409.4,127.3v4" stroke="#c88a40" stroke-width="0.8"/>
<path d="M404.5,134.7h10l-5,5.3z" fill="#f08c1e"/>
<path d="M406,140.6h7a1,1 0 0 1 1,1v8.6a1,1 0 0 1 -1,1h-2l-1.5,2.6l-1.5,-2.6h-2a1,1 0 0 1 -1,-1v-8.6a1,1 0 0 1 1,-1z" fill="#1a1a1a" stroke="#f08c1e" stroke-width="1.2"/>
<path d="M407,143.5h5M409.5,143.5v5.5" stroke="#f0a040" stroke-width="1.1"/>
<path d="M2.0,338.0 L2.0,319.6 L3.5,317.9 L4.5,323.5 L5.5,316.6 L6.7,322.4 L7.7,308.9 L8.7,324.0 L9.9,317.2 L11.4,320.7 L12.4,321.2 L13.9,314.9 L15.1,319.3 L16.3,316.0 L17.3,317.6 L18.5,318.0 L19.5,315.4 L21.0,320.9 L22.2,318.7 L23.4,314.8 L24.9,316.5 L25.9,310.8 L27.4,319.7 L28.4,313.5 L29.4,320.3 L30.4,321.2 L31.6,315.3 L32.8,322.5 L34.3,314.2 L35.5,315.2 L37.0,313.1 L38.0,314.5 L39.0,309.5 L40.2,316.6 L41.7,307.5 L42.7,314.1 L43.9,310.4 L45.4,318.5 L46.4,318.6 L47.9,312.1 L49.1,319.1 L50.6,314.1 L52.1,318.4 L52.6,318.2 L52.9,332.0 L53.2,339.0 L53.6,349.0 L54.5,353.0 L55.5,351.0 L56.1,345.0 L56.4,333.0 L57.0,325.1 L58.2,323.9 L58.8,325.0 L59.8,318.0 L61.3,322.0 L62.8,316.1 L64.3,319.2 L65.8,317.6 L66.8,322.3 L67.8,315.7 L68.8,314.8 L70.0,320.8 L71.0,317.2 L72.2,319.8 L73.7,312.2 L74.9,322.1 L76.1,317.6 L77.1,313.8 L78.3,317.9 L79.8,315.3 L80.8,319.9 L82.0,318.5 L83.2,313.0 L84.4,313.3 L85.6,316.4 L86.6,311.9 L87.6,315.0 L88.8,304.8 L89.8,316.8 L90.8,310.7 L92.0,317.2 L93.0,313.6 L94.5,317.0 L96.0,313.9 L97.2,312.4 L98.4,320.0 L99.9,314.8 L101.1,317.2 L102.6,314.5 L104.1,318.4 L104.6,318.3 L104.9,332.0 L105.2,332.0 L105.6,342.0 L106.5,346.0 L107.5,344.0 L108.1,338.0 L108.4,326.0 L109.0,325.8 L110.2,322.1 L111.5,316.6 L112.7,322.2 L113.7,313.5 L114.7,318.7 L115.9,313.9 L117.1,311.4 L118.3,314.3 L119.5,315.0 L120.7,318.0 L121.7,314.3 L123.2,318.0 L124.7,319.2 L125.9,314.1 L127.1,318.8 L128.6,311.6 L129.8,317.5 L131.3,309.2 L132.5,315.5 L133.7,311.4 L134.9,307.3 L136.4,307.8 L137.4,303.9 L138.9,314.8 L140.1,311.1 L141.6,312.2 L142.8,307.0 L143.8,306.4 L145.3,306.3 L146.8,312.3 L148.0,303.7 L149.0,308.2 L150.0,314.9 L151.2,309.3 L152.4,314.1 L153.9,314.4 L155.1,310.6 L156.3,318.1 L157.8,313.4 L158.8,318.9 L159.3,317.3 L159.6,332.0 L159.9,332.0 L160.3,342.0 L161.2,346.0 L162.2,344.0 L162.8,338.0 L163.1,326.0 L163.7,326.6 L164.9,322.6 L165.8,317.1 L166.8,314.6 L167.8,320.1 L169.0,316.0 L170.2,319.9 L171.7,315.3 L173.2,318.9 L174.4,317.3 L175.9,318.0 L177.4,315.0 L178.6,319.0 L179.8,314.1 L181.3,316.9 L182.3,312.3 L183.5,318.3 L184.5,312.2 L186.0,314.5 L187.5,309.6 L188.7,315.2 L189.9,310.2 L191.4,317.0 L192.4,311.3 L193.9,315.1 L194.9,308.8 L195.9,312.0 L197.4,308.1 L198.9,308.3 L200.4,309.9 L201.4,315.3 L202.4,310.7 L203.9,316.8 L204.9,318.4 L205.9,308.6 L206.9,309.5 L208.4,314.3 L209.4,316.9 L210.4,306.0 L211.6,317.2 L211.9,332.0 L212.2,330.0 L212.6,340.0 L213.5,344.0 L214.5,342.0 L215.1,336.0 L215.4,324.0 L216.0,326.4 L217.2,322.2 L217.5,315.4 L218.7,317.1 L220.2,324.1 L221.2,318.4 L222.7,319.9 L224.2,319.3 L225.7,314.8 L226.9,315.3 L228.1,321.7 L229.3,314.5 L230.5,319.2 L231.5,320.0 L232.5,312.7 L233.7,314.1 L234.7,318.7 L236.2,311.7 L237.7,315.4 L238.9,310.2 L239.9,310.5 L240.9,310.4 L242.1,316.1 L243.6,316.0 L245.1,308.2 L246.3,312.2 L247.5,310.1 L248.5,312.3 L249.5,309.4 L250.5,311.6 L252.0,308.6 L253.0,307.3 L254.0,307.6 L255.2,315.7 L256.4,310.6 L257.9,315.2 L259.4,310.9 L260.4,314.3 L261.9,312.4 L262.9,317.7 L264.4,314.7 L265.6,317.3 L265.9,332.0 L266.2,331.0 L266.6,341.0 L267.5,345.0 L268.5,343.0 L269.1,337.0 L269.4,325.0 L270.0,326.1 L271.2,323.5 L271.6,316.9 L272.8,315.7 L273.8,320.3 L275.0,315.5 L276.5,321.3 L277.5,315.6 L278.7,321.4 L279.9,315.8 L281.1,320.7 L282.3,317.1 L283.8,321.3 L284.8,313.0 L286.3,312.6 L287.3,317.1 L288.8,314.8 L290.3,316.0 L291.3,316.2 L292.8,311.8 L294.0,316.2 L295.2,308.5 L296.7,314.1 L298.2,309.5 L299.7,315.5 L300.7,310.2 L302.2,314.2 L303.2,308.5 L304.7,314.1 L305.7,310.5 L306.9,309.4 L308.1,311.6 L309.6,315.9 L311.1,309.1 L312.6,316.8 L313.6,317.0 L314.6,316.2 L316.1,316.3 L317.1,320.9 L317.6,317.6 L317.9,332.0 L318.2,331.0 L318.6,341.0 L319.5,345.0 L320.5,343.0 L321.1,337.0 L321.4,325.0 L322.0,326.1 L323.2,323.4 L324.7,321.2 L326.2,314.2 L327.2,320.0 L328.2,316.6 L329.7,320.4 L330.9,314.9 L332.1,318.9 L333.6,314.3 L334.8,320.0 L336.3,311.7 L337.8,318.6 L338.8,312.2 L339.8,315.1 L340.8,308.8 L342.0,317.4 L343.0,314.9 L344.5,307.3 L345.5,302.0 L346.5,311.3 L348.0,306.6 L349.0,312.9 L350.5,314.2 L352.0,306.8 L353.2,310.6 L354.7,306.9 L355.7,304.8 L356.9,309.0 L358.1,296.4 L359.6,309.4 L360.8,304.8 L361.8,311.9 L363.3,300.1 L364.3,313.2 L365.3,310.8 L366.8,313.5 L368.0,311.8 L369.5,317.7 L370.6,316.6 L370.9,332.0 L371.2,333.0 L371.6,343.0 L372.5,347.0 L373.5,345.0 L374.1,339.0 L374.4,327.0 L375.0,325.4 L376.2,323.6 L376.7,325.8 L377.9,319.1 L379.1,323.8 L380.1,317.1 L381.1,315.9 L382.1,320.4 L383.1,316.9 L384.1,316.1 L385.6,312.2 L386.8,317.9 L388.3,314.8 L389.3,320.2 L390.8,311.8 L392.3,313.9 L393.5,310.0 L394.5,314.3 L396.0,307.4 L397.5,309.8 L398.5,308.8 L400.0,315.4 L401.5,306.1 L403.0,311.5 L404.5,304.1 L406.0,308.2 L407.0,304.0 L408.5,307.4 L410.0,303.0 L411.2,304.5 L412.4,309.6 L413.4,310.6 L414.6,310.7 L416.1,310.8 L417.3,313.8 L418.5,311.5 L420.0,317.7 L421.5,313.1 L422.6,316.3 L422.9,332.0 L423.2,330.0 L423.6,340.0 L424.5,344.0 L425.5,342.0 L426.1,336.0 L426.4,324.0 L427.0,325.5 L428.2,322.9 L429.2,318.9 L430.4,315.4 L431.6,315.9 L433.1,319.4 L434.6,306.0 L435.6,322.0 L437.1,312.1 L438.3,318.6 L439.5,313.5 L440.7,322.1 L441.9,312.3 L442.9,316.6 L443.9,307.4 L445.1,310.2 L446.3,315.8 L447.5,308.1 L449.0,313.3 L450.0,311.1 L451.2,309.7 L452.7,300.4 L454.2,310.0 L455.7,300.6 L456.9,301.8 L457.9,302.2 L459.4,299.2 L460.6,305.6 L462.1,300.9 L463.3,300.4 L464.5,305.2 L465.7,300.3 L466.9,305.8 L467.9,303.7 L469.4,306.9 L470.4,304.0 L471.4,298.3 L472.4,314.3 L473.6,312.3 L474.8,313.6 L476.0,316.7 L477.1,315.8 L477.4,332.0 L477.7,328.0 L478.1,338.0 L479.0,342.0 L480.0,340.0 L480.6,334.0 L480.9,322.0 L481.5,325.2 L482.7,322.8 L483.1,318.4 L484.1,324.5 L485.6,313.6 L486.6,323.7 L487.6,313.2 L488.8,318.2 L490.0,309.8 L491.5,318.0 L492.5,316.6 L493.7,314.1 L494.9,317.9 L496.4,310.4 L497.9,315.5 L498.9,306.2 L500.1,314.6 L501.3,309.8 L502.8,313.0 L504.3,309.6 L505.5,313.6 L507.0,302.6 L508.2,313.1 L509.4,310.5 L510.9,307.3 L512.4,312.9 L513.9,305.7 L515.1,308.3 L516.6,299.3 L517.8,307.8 L518.8,307.6 L520.3,305.8 L521.5,304.6 L522.5,311.1 L524.0,303.5 L525.5,304.2 L526.5,308.7 L527.5,309.1 L528.5,314.4 L529.5,311.9 L530.6,316.1 L530.9,332.0 L531.2,329.0 L531.6,339.0 L532.5,343.0 L533.5,341.0 L534.1,335.0 L534.4,323.0 L535.0,326.8 L536.2,323.4 L537.4,320.2 L538.4,320.4 L539.9,318.9 L541.1,315.6 L542.3,311.8 L543.3,320.2 L544.3,313.9 L545.3,318.3 L546.5,317.4 L548.0,312.8 L549.5,318.9 L550.7,314.9 L552.2,317.2 L553.4,312.9 L554.6,314.5 L555.6,302.1 L556.6,317.3 L558.1,308.4 L559.3,313.2 L560.8,311.5 L561.8,308.2 L563.0,310.6 L564.0,303.7 L565.5,311.5 L567.0,306.9 L568.0,308.8 L569.0,305.5 L570.0,303.7 L571.5,311.5 L572.5,306.4 L573.7,304.0 L575.2,310.2 L576.2,311.3 L577.4,304.1 L578.4,313.3 L579.4,308.1 L580.9,318.3 L582.1,309.4 L583.6,320.7 L584.6,315.0 L585.6,316.6 L585.9,332.0 L586.2,334.0 L586.6,344.0 L587.5,348.0 L588.5,346.0 L589.1,340.0 L589.4,328.0 L590.0,325.6 L591.2,323.6 L592.3,317.4 L593.5,322.4 L595.0,315.8 L596.0,321.8 L597.2,318.0 L598.4,322.5 L599.6,316.2 L600.6,320.6 L601.8,319.9 L602.8,318.7 L604.3,313.8 L605.5,311.1 L607.0,309.2 L608.0,317.9 L609.2,309.0 L610.4,311.4 L611.9,310.2 L613.1,308.3 L614.1,310.2 L615.1,310.9 L616.1,317.6 L617.6,314.6 L618.8,317.2 L619.8,309.7 L621.3,316.6 L622.3,318.9 L623.3,313.2 L624.8,312.3 L625.8,313.9 L627.0,310.3 L628.2,317.0 L629.7,315.8 L630.7,315.5 L631.9,311.8 L633.4,316.1 L634.9,306.7 L636.1,318.5 L637.6,315.9 L638.8,312.0 L639.8,319.9 L640.6,317.5 L640.9,332.0 L641.2,327.0 L641.6,337.0 L642.5,341.0 L643.5,339.0 L644.1,333.0 L644.4,321.0 L645.0,326.2 L646.2,323.4 L646.4,322.9 L647.6,318.8 L649.1,318.5 L650.6,321.8 L651.6,318.9 L652.2,317.0 L653.2,324.0 L654.0,327.0 L654.8,322.0 L656.0,314.0 L658.2,313.8 L659.4,310.8 L660.9,316.3 L662.1,308.6 L663.3,313.1 L664.5,316.4 L665.5,309.0 L667.0,317.0 L668.5,301.6 L670.0,306.9 L671.2,305.7 L672.4,311.9 L673.9,304.2 L675.4,307.7 L676.6,307.4 L678.1,303.6 L679.1,307.5 L680.1,303.5 L681.1,309.8 L682.3,307.4 L683.8,311.4 L685.3,307.6 L686.8,313.9 L688.3,306.8 L689.3,310.6 L690.3,310.4 L691.6,316.2 L691.9,332.0 L692.2,334.0 L692.6,344.0 L693.5,348.0 L694.5,346.0 L695.1,340.0 L695.4,328.0 L696.0,325.3 L697.2,322.2 L697.6,316.9 L698.6,322.0 L699.8,316.4 L701.3,323.6 L702.8,318.9 L703.8,318.0 L704.8,325.7 L705.8,311.5 L706.8,311.0 L708.0,320.4 L709.5,316.0 L711.0,322.1 L712.2,316.3 L713.4,321.7 L714.9,312.2 L715.9,319.2 L716.9,311.9 L717.9,316.8 L719.4,316.8 L720.4,317.7 L721.9,309.7 L722.9,316.5 L724.4,304.5 L725.6,314.3 L726.6,309.5 L727.6,308.7 L728.8,308.6 L730.0,312.7 L731.0,305.7 L732.5,311.8 L733.7,307.8 L734.7,315.0 L735.7,306.9 L737.2,313.9 L738.2,305.7 L739.7,313.2 L740.9,314.8 L742.4,310.9 L743.9,315.2 L745.4,314.1 L747.1,317.3 L747.4,332.0 L747.7,333.0 L748.1,343.0 L749.0,347.0 L750.0,345.0 L750.6,339.0 L750.9,327.0 L751.5,326.4 L752.7,322.7 L753.6,325.5 L755.1,322.1 L756.3,316.0 L757.3,325.2 L758.5,319.2 L759.5,324.5 L761.0,315.6 L762.5,321.7 L764.0,316.2 L765.5,320.3 L767.0,316.5 L768.5,314.2 L769.7,305.3 L770.7,315.8 L771.9,314.8 L772.9,309.9 L773.9,317.9 L775.4,310.4 L776.9,314.4 L778.4,304.9 L779.4,316.4 L780.4,309.6 L781.4,315.5 L782.9,309.8 L783.9,308.4 L784.9,315.2 L785.9,310.3 L786.9,312.1 L788.4,307.0 L789.6,316.3 L791.1,314.7 L792.6,316.9 L793.6,313.6 L794.8,317.8 L795.8,312.5 L797.0,312.3 L798.0,314.8 L799.3,317.4 L799.6,329.0 L799.9,330.0 L800.3,340.0 L801.2,344.0 L802.2,342.0 L802.8,336.0 L803.1,324.0 L803.7,326.7 L804.9,323.3 L805.9,320.1 L807.1,326.4 L808.6,318.2 L809.8,325.8 L811.3,318.3 L812.3,321.4 L813.3,316.1 L814.5,323.0 L815.7,316.5" fill="none" stroke="#20c8d0" stroke-width="0.95" stroke-linejoin="round"/>
<path d="M807,338.5L813.2,333.2V343.8Z" fill="#22d0d8"/><rect x="813" y="337.5" width="4" height="2" fill="#22d0d8"/>
<path d="M5,338.5h35l3.5,6.9l-3.5,6.9h-35a2,2 0 0 1 -2,-2v-9.8a2,2 0 0 1 2,-2z" fill="#021a1c" stroke="#1fc4cc" stroke-width="1.2"/>
<path d="M5,338.5h11v13.8h-11a2,2 0 0 1 -2,-2v-9.8a2,2 0 0 1 2,-2z" fill="#1fc4cc"/>
</svg>
<div class="t" style="left:4.20px;top:340.69px;font-size:8.4px;color:#06181a;-webkit-text-stroke:.25px #06181a"><span style="transform:scaleX(0.77);transform-origin:0 0">C 2</span></div>
<div class="t" style="left:16.50px;top:340.69px;font-size:8.4px;color:#28d4dc;-webkit-text-stroke:.15px #28d4dc"><span style="transform:scaleX(0.81);transform-origin:0 0">850 mV</span></div>
<div class="t" style="left:47.80px;top:320.49px;font-size:11px;color:#22c8d0;-webkit-text-stroke:.4px #22c8d0"><span style="transform:scaleX(0.95);transform-origin:0 0">Vout</span></div>
<div class="t" style="left:615.20px;width:200px;text-align:right;top:144.27px;font-size:7.6px;color:#1aa8ae;"><span style="transform:scaleX(0.78);transform-origin:100% 0">875 mV</span></div>
<div class="t" style="left:615.20px;width:200px;text-align:right;top:183.77px;font-size:7.6px;color:#1aa8ae;"><span style="transform:scaleX(0.78);transform-origin:100% 0">870 mV</span></div>
<div class="t" style="left:615.20px;width:200px;text-align:right;top:223.27px;font-size:7.6px;color:#1aa8ae;"><span style="transform:scaleX(0.78);transform-origin:100% 0">865 mV</span></div>
<div class="t" style="left:615.20px;width:200px;text-align:right;top:262.77px;font-size:7.6px;color:#1aa8ae;"><span style="transform:scaleX(0.78);transform-origin:100% 0">860 mV</span></div>
<div class="t" style="left:615.20px;width:200px;text-align:right;top:302.27px;font-size:7.6px;color:#1aa8ae;"><span style="transform:scaleX(0.78);transform-origin:100% 0">855 mV</span></div>
<div class="t" style="left:615.20px;width:200px;text-align:right;top:341.77px;font-size:7.6px;color:#1aa8ae;"><span style="transform:scaleX(0.78);transform-origin:100% 0">850 mV</span></div>
<div class="t" style="left:615.20px;width:200px;text-align:right;top:381.27px;font-size:7.6px;color:#1aa8ae;"><span style="transform:scaleX(0.78);transform-origin:100% 0">845 mV</span></div>
<div class="t" style="left:615.20px;width:200px;text-align:right;top:420.77px;font-size:7.6px;color:#1aa8ae;"><span style="transform:scaleX(0.78);transform-origin:100% 0">840 mV</span></div>
<div class="t" style="left:615.20px;width:200px;text-align:right;top:460.27px;font-size:7.6px;color:#1aa8ae;"><span style="transform:scaleX(0.78);transform-origin:100% 0">835 mV</span></div>
<div class="t" style="left:615.20px;width:200px;text-align:right;top:499.77px;font-size:7.6px;color:#1aa8ae;"><span style="transform:scaleX(0.78);transform-origin:100% 0">830 mV</span></div>
<svg class="a" style="left:0;top:0" width="896" height="200"><path d="M798,139H814V157Z" fill="#6a6a6a"/><circle cx="810" cy="142.8" r="2.7" fill="none" stroke="#d8d8d8" stroke-width="1"/><path d="M808.1,144.7L805,147.8" stroke="#d8d8d8" stroke-width="1.3"/></svg>
<div class="t" style="left:-16.90px;width:200px;text-align:center;top:521.23px;font-size:8px;color:#a8a8a8;"><span style="transform:scaleX(0.85);transform-origin:50% 0">-8 μs</span></div>
<div class="t" style="left:64.70px;width:200px;text-align:center;top:521.23px;font-size:8px;color:#a8a8a8;"><span style="transform:scaleX(0.85);transform-origin:50% 0">-6 μs</span></div>
<div class="t" style="left:146.30px;width:200px;text-align:center;top:521.23px;font-size:8px;color:#a8a8a8;"><span style="transform:scaleX(0.85);transform-origin:50% 0">-4 μs</span></div>
<div class="t" style="left:227.90px;width:200px;text-align:center;top:521.23px;font-size:8px;color:#a8a8a8;"><span style="transform:scaleX(0.85);transform-origin:50% 0">-2 μs</span></div>
<div class="t" style="left:309.50px;width:200px;text-align:center;top:521.23px;font-size:8px;color:#a8a8a8;"><span style="transform:scaleX(0.85);transform-origin:50% 0">0 s</span></div>
<div class="t" style="left:391.10px;width:200px;text-align:center;top:521.23px;font-size:8px;color:#a8a8a8;"><span style="transform:scaleX(0.85);transform-origin:50% 0">2 μs</span></div>
<div class="t" style="left:472.70px;width:200px;text-align:center;top:521.23px;font-size:8px;color:#a8a8a8;"><span style="transform:scaleX(0.85);transform-origin:50% 0">4 μs</span></div>
<div class="t" style="left:554.30px;width:200px;text-align:center;top:521.23px;font-size:8px;color:#a8a8a8;"><span style="transform:scaleX(0.85);transform-origin:50% 0">6 μs</span></div>
<div class="t" style="left:635.90px;width:200px;text-align:center;top:521.23px;font-size:8px;color:#a8a8a8;"><span style="transform:scaleX(0.85);transform-origin:50% 0">8 μs</span></div>
<div class="t" style="left:833.50px;top:-0.37px;font-size:16.5px;color:#fff;font-weight:bold;letter-spacing:-0.5px;-webkit-text-stroke:0.7px #fff"><span style="transform:scaleX(0.78);transform-origin:0 0">Tektronix</span></div>
<svg class="a" style="left:0;top:0" width="896" height="20"><path d="M847.6,13.6L854.6,4.6" stroke="#1ec8ea" stroke-width="2.4"/></svg>
<div class="a" style="left:825px;top:15px;width:75px;height:517px;border:1px solid #46423e;border-radius:3px 3px 0 0"></div>
<div class="t" style="left:841.20px;top:16.96px;font-size:9.5px;color:#e8e8e8;font-weight:bold"><span style="transform:scaleX(0.8);transform-origin:0 0">Add New...</span></div>
<div class="sbtn" style="left:829.5px;top:30px"><span>Cursors</span></div>
<div class="sbtn" style="left:863px;top:30px"><span>Callout</span></div>
<div class="sbtn" style="left:829.5px;top:54.5px"><span>Measure</span></div>
<div class="sbtn" style="left:863px;top:54.5px"><span>Search</span></div>
<div class="sbtn" style="left:829.5px;top:79px;line-height:9px"><span style="top:-0.5px;text-align:center">Results<br>Table</span></div>
<div class="sbtn" style="left:863px;top:79px"><span>Plot</span></div>
<div class="a" style="left:826px;top:102px;width:70px;height:1px;background:#47433f"></div>
<div class="sbtn" style="left:829.5px;top:106px"><span></span></div>
<svg class="a" style="left:836px;top:107px" width="18" height="17"><rect x="2.5" y="2.5" width="11" height="10" fill="none" stroke="#cfcfcf" stroke-width="1" stroke-dasharray="1 1.2"/><circle cx="9" cy="6.5" r="2.8" fill="none" stroke="#e0e0e0" stroke-width="1.1"/><path d="M7,8.6L4.2,11.5" stroke="#e0e0e0" stroke-width="1.4"/><path d="M12,11L16,14.5L14,15L12.5,13z" fill="#d8d8d8"/></svg>
<div class="sbtn" style="left:863px;top:106px"><span>More...</span></div>
<div class="a" style="left:826px;top:130px;width:70px;height:1px;background:#47433f"></div>
<div class="a" style="left:827px;top:139.5px;width:68px;height:31px;border-radius:3px;background:#c8c8c8;overflow:hidden"><div style="height:9.5px;background:#555"></div></div>
<div class="t" style="left:828.80px;top:140.48px;font-size:9px;color:#e8e8e8;"><span style="transform:scaleX(0.76);transform-origin:0 0">Meas 1</span></div>
<div class="a" style="left:881.7px;top:141.5px;width:10px;height:6px;border-radius:3px;background:#1fc8d0"></div>
<div class="t" style="left:884.50px;top:141.72px;font-size:6px;color:#222;"><span style="transform:scaleX(1);transform-origin:0 0">2</span></div>
<div class="t" style="left:828.80px;top:150.58px;font-size:9px;color:#2a2a2a;"><span style="transform:scaleX(0.735);transform-origin:0 0">Peak-to-Peak</span></div>
<div class="t" style="left:828.80px;top:160.18px;font-size:9px;color:#2a2a2a;"><span style="transform:scaleX(0.735);transform-origin:0 0">μ': 7.333 mV</span></div>
<div class="a" style="left:827px;top:175px;width:68px;height:31px;border-radius:3px;background:#c8c8c8;overflow:hidden"><div style="height:9.5px;background:#555"></div></div>
<div class="t" style="left:828.80px;top:175.98px;font-size:9px;color:#e8e8e8;"><span style="transform:scaleX(0.76);transform-origin:0 0">Meas 2</span></div>
<div class="a" style="left:881.7px;top:177px;width:10px;height:6px;border-radius:3px;background:#1fc8d0"></div>
<div class="t" style="left:884.50px;top:177.22px;font-size:6px;color:#222;"><span style="transform:scaleX(1);transform-origin:0 0">2</span></div>
<div class="t" style="left:828.80px;top:186.08px;font-size:9px;color:#2a2a2a;"><span style="transform:scaleX(0.735);transform-origin:0 0">Maximum</span></div>
<div class="t" style="left:828.80px;top:195.68px;font-size:9px;color:#2a2a2a;"><span style="transform:scaleX(0.735);transform-origin:0 0">μ': 856.2 mV</span></div>
<div class="a" style="left:827px;top:210.5px;width:68px;height:31px;border-radius:3px;background:#c8c8c8;overflow:hidden"><div style="height:9.5px;background:#555"></div></div>
<div class="t" style="left:828.80px;top:211.48px;font-size:9px;color:#e8e8e8;"><span style="transform:scaleX(0.76);transform-origin:0 0">Meas 3</span></div>
<div class="a" style="left:881.7px;top:212.5px;width:10px;height:6px;border-radius:3px;background:#1fc8d0"></div>
<div class="t" style="left:884.50px;top:212.72px;font-size:6px;color:#222;"><span style="transform:scaleX(1);transform-origin:0 0">2</span></div>
<div class="t" style="left:828.80px;top:221.58px;font-size:9px;color:#2a2a2a;"><span style="transform:scaleX(0.735);transform-origin:0 0">Minimum</span></div>
<div class="t" style="left:828.80px;top:231.18px;font-size:9px;color:#2a2a2a;"><span style="transform:scaleX(0.735);transform-origin:0 0">μ': 848.9 mV</span></div>
<div class="a" style="left:827px;top:246.5px;width:68px;height:31px;border-radius:3px;background:#c8c8c8;overflow:hidden"><div style="height:9.5px;background:#000"></div></div>
<div class="t" style="left:828.80px;top:247.48px;font-size:9px;color:#1fc4cc;"><span style="transform:scaleX(0.76);transform-origin:0 0">Meas 4</span></div>
<div class="a" style="left:881.7px;top:248.5px;width:10px;height:6px;border-radius:3px;background:#1fc8d0"></div>
<div class="t" style="left:884.50px;top:248.72px;font-size:6px;color:#222;"><span style="transform:scaleX(1);transform-origin:0 0">2</span></div>
<div class="t" style="left:828.80px;top:257.58px;font-size:9px;color:#2a2a2a;"><span style="transform:scaleX(0.735);transform-origin:0 0">Mean</span></div>
<div class="t" style="left:828.80px;top:267.18px;font-size:9px;color:#2a2a2a;"><span style="transform:scaleX(0.735);transform-origin:0 0">μ': 853.8 mV</span></div>
<div class="a" style="left:821.5px;top:268px;width:2px;height:2px;background:#e0e0e0"></div>
<div class="a" style="left:821.5px;top:272.5px;width:2px;height:2px;background:#e0e0e0"></div>
<div class="a" style="left:821.5px;top:277px;width:2px;height:2px;background:#e0e0e0"></div>
<div class="a" style="left:1.5px;top:533.5px;width:42px;height:41px;border-radius:3px;background:#c8c8c8;overflow:hidden"><div style="height:10.5px;background:#1fc4cc"></div></div>
<div class="t" style="left:4.00px;top:534.46px;font-size:9.5px;color:#0d2426;"><span style="transform:scaleX(0.72);transform-origin:0 0">Ch 2</span></div>
<div class="t" style="left:4.00px;top:545.08px;font-size:9px;color:#2a2a2a;"><span style="transform:scaleX(0.71);transform-origin:0 0">5 mV/div</span></div>
<div class="t" style="left:4.00px;top:564.88px;font-size:9px;color:#2a2a2a;"><span style="transform:scaleX(0.75);transform-origin:0 0">20 MHz</span></div>
<svg class="a" style="left:3px;top:554px" width="10" height="8"><path d="M1.5,7V4.5A3.5,3.5 0 0 1 8.5,4.5V7" fill="none" stroke="#444" stroke-width="1.2"/><circle cx="5" cy="4.5" r="1.2" fill="#444"/></svg>
<svg class="a" style="left:35px;top:565px" width="6" height="6"><path d="M0.5,0.5h2v2h3v3h-2v-2h-3z" fill="#333"/></svg>
<div class="cbtn" style="left:404.5px"><div class="cbar" style="background:#e6d62a"></div><div style="font-size:11px;line-height:11px;margin-top:17.5px">1</div></div>
<div class="cbtn" style="left:425.5px"><div class="cbar" style="background:#e23a58"></div><div style="font-size:11px;line-height:11px;margin-top:17.5px">3</div></div>
<div class="cbtn" style="left:446.5px"><div class="cbar" style="background:#6cc830"></div><div style="font-size:11px;line-height:11px;margin-top:17.5px">4</div></div>
<div class="a" style="left:470px;top:534px;width:1px;height:41px;background:#4a4a4a"></div>
<div class="cbtn" style="left:475px"><div class="cbar" style="background:#e8801e"></div><div style="font-size:9px;line-height:9px;position:absolute;top:8.8px;left:0;right:0"><span>Add<br>New<br>Math</span></div></div>
<div class="cbtn" style="left:496px"><div class="cbar" style="background:#e6d62a"></div><div style="font-size:9px;line-height:9px;position:absolute;top:8.8px;left:0;right:0"><span>Add<br>New<br>Ref</span></div></div>
<div class="cbtn" style="left:517px"><div class="cbar" style="background:#b448e0"></div><div style="font-size:9px;line-height:9px;position:absolute;top:8.8px;left:0;right:0"><span>Add<br>New<br>Bus</span></div></div>
<div class="a" style="left:540px;top:534px;width:1px;height:41px;background:#4a4a4a"></div>
<div class="cbtn" style="left:545px"><div class="cbar" style="background:#4a4a4a"></div><div style="font-size:9px;line-height:9px;position:absolute;top:17.2px;left:0;right:0"><span>DVM</span></div></div>
<div class="cbtn" style="left:569px"><div class="cbar" style="background:#4a4a4a"></div><div style="font-size:9px;line-height:9px;position:absolute;top:17.2px;left:0;right:0"><span>AFG</span></div></div>
<div class="a" style="left:592px;top:534px;width:1px;height:41px;background:#4a4a4a"></div>
<div class="a" style="left:598px;top:534px;width:92px;height:41px;border-radius:3px;background:#c8c8c8;overflow:hidden"><div style="height:10px;background:#5a5a5a"></div></div>
<div class="t" style="left:599.00px;top:533.96px;font-size:9.5px;color:#e8e8e8;"><span style="transform:scaleX(0.85);transform-origin:0 0">Horizontal</span></div>
<div class="a" style="left:693.5px;top:534px;width:73.5px;height:41px;border-radius:3px;background:#c8c8c8;overflow:hidden"><div style="height:10px;background:#5a5a5a"></div></div>
<div class="t" style="left:695.50px;top:533.96px;font-size:9.5px;color:#e8e8e8;"><span style="transform:scaleX(0.77);transform-origin:0 0">Trigger</span></div>
<div class="a" style="left:770px;top:534px;width:69px;height:41px;border-radius:3px;background:#c8c8c8;overflow:hidden"><div style="height:10px;background:#5a5a5a"></div></div>
<div class="t" style="left:772.00px;top:533.96px;font-size:9.5px;color:#e8e8e8;"><span style="transform:scaleX(0.85);transform-origin:0 0">Acquisition</span></div>
<div class="t" style="left:600.00px;top:545.98px;font-size:9px;color:#2a2a2a;"><span style="transform:scaleX(0.68);transform-origin:0 0">2 μs/div</span></div>
<div class="t" style="left:649.50px;top:545.98px;font-size:9px;color:#2a2a2a;"><span style="transform:scaleX(0.68);transform-origin:0 0">20 μs</span></div>
<div class="t" style="left:600.00px;top:555.98px;font-size:9px;color:#2a2a2a;"><span style="transform:scaleX(0.68);transform-origin:0 0">SR: 3.125 GS/s</span></div>
<div class="t" style="left:649.50px;top:555.98px;font-size:9px;color:#2a2a2a;"><span style="transform:scaleX(0.68);transform-origin:0 0">320 ps/pt</span></div>
<div class="t" style="left:600.00px;top:565.98px;font-size:9px;color:#2a2a2a;"><span style="transform:scaleX(0.68);transform-origin:0 0">RL: 62.5 kpts</span></div>
<svg class="a" style="left:649px;top:565px" width="5" height="7"><path d="M0.5,0.5h4v4l-2,2l-2,-2z" fill="#c06a10"/><rect x="1.5" y="1.5" width="2" height="2.5" fill="#333"/></svg>
<div class="t" style="left:656.00px;top:565.98px;font-size:9px;color:#2a2a2a;"><span style="transform:scaleX(0.68);transform-origin:0 0">50%</span></div>
<div class="a" style="left:695.5px;top:545.3px;width:13.5px;height:8.6px;border-radius:3px;background:#1fc8d0;border:1px solid #8a5a50"></div>
<div class="t" style="left:700.50px;top:545.73px;font-size:8px;color:#123;"><span style="transform:scaleX(0.9);transform-origin:0 0">2</span></div>
<svg class="a" style="left:713px;top:545px" width="10" height="9"><path d="M1,8L3.5,7.5L7,1.5L9,1" fill="none" stroke="#5050a0" stroke-width="1"/></svg>
<div class="t" style="left:726.00px;top:544.88px;font-size:9px;color:#2a2a2a;"><span style="transform:scaleX(0.68);transform-origin:0 0">850.8 mV</span></div>
<div class="t" style="left:772.00px;top:545.18px;font-size:9px;color:#2a2a2a;"><span style="transform:scaleX(0.68);transform-origin:0 0">Auto,</span></div>
<div class="t" style="left:634.00px;width:200px;text-align:right;top:545.18px;font-size:9px;color:#2a2a2a;"><span style="transform:scaleX(0.68);transform-origin:100% 0">Analyze</span></div>
<div class="t" style="left:772.00px;top:555.18px;font-size:9px;color:#2a2a2a;"><span style="transform:scaleX(0.68);transform-origin:0 0">Sample: 12 bits</span></div>
<div class="t" style="left:772.00px;top:565.18px;font-size:9px;color:#2a2a2a;"><span style="transform:scaleX(0.68);transform-origin:0 0">578 Acqs</span></div>
<div class="a" style="left:845.5px;top:534px;width:1px;height:41px;background:#4a4a4a"></div>
<div class="a" style="left:850.5px;top:534.5px;width:41px;height:18px;border-radius:3px;background:#f0202e"></div>
<div class="t" style="left:771.30px;width:200px;text-align:center;top:540.07px;font-size:7px;color:#fff;font-weight:bold"><span style="transform:scaleX(0.85);transform-origin:50% 0">Stopped</span></div>
<div class="a" style="left:850.5px;top:556px;width:41px;height:19px;border-radius:2px;background:#c8c8c8"></div>
<div class="t" style="left:771.30px;width:200px;text-align:center;top:556.60px;font-size:8.5px;color:#2a2a2a;"><span style="transform:scaleX(0.79);transform-origin:50% 0">03 May 2023</span></div>
<div class="t" style="left:771.20px;width:200px;text-align:center;top:565.20px;font-size:8.5px;color:#2a2a2a;"><span style="transform:scaleX(0.79);transform-origin:50% 0">14:43:11</span></div>
</body></html>
